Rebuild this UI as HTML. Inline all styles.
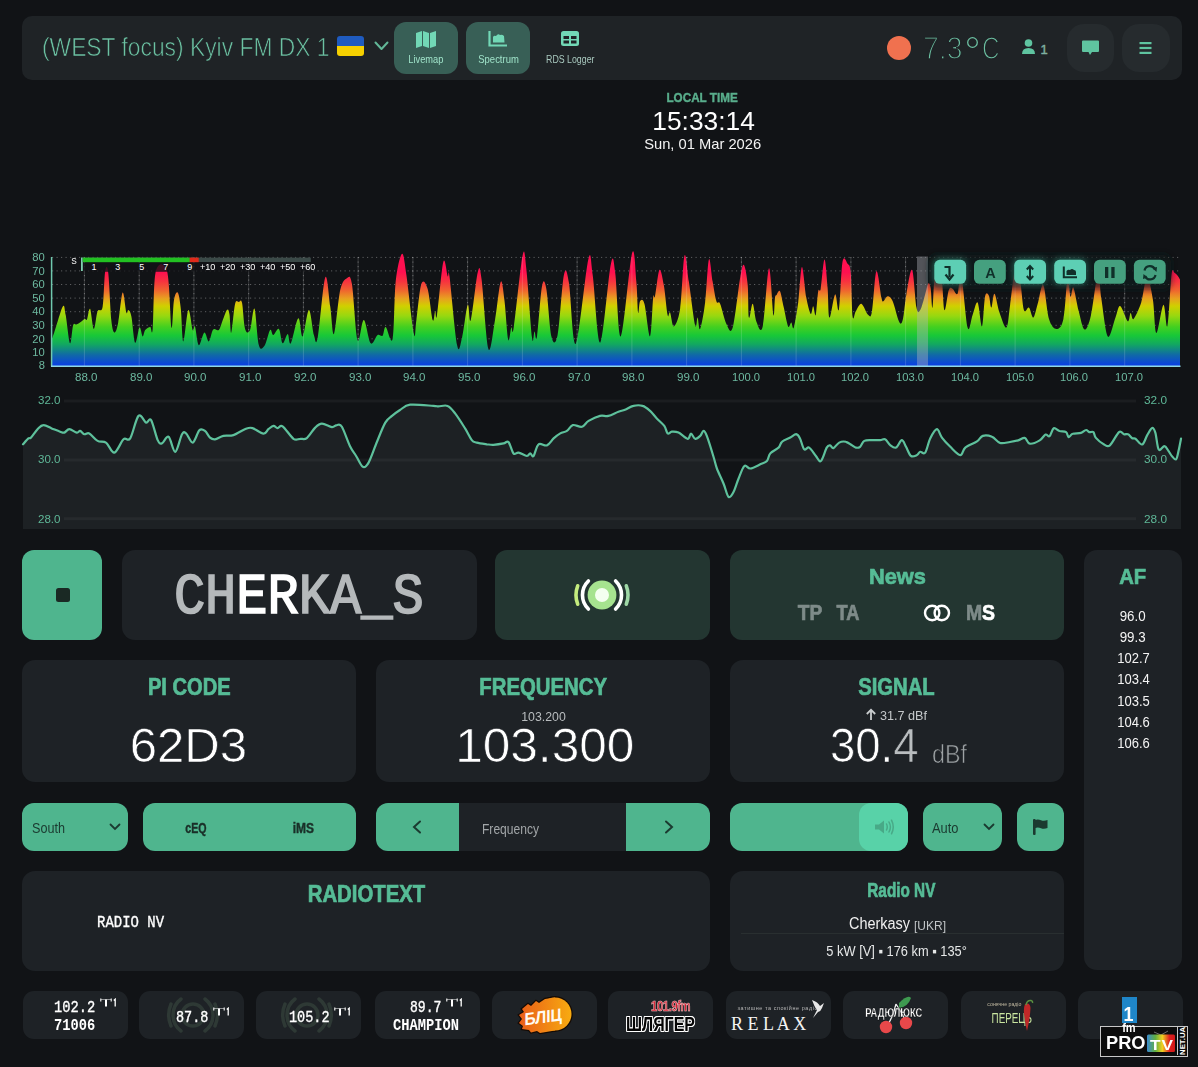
<!DOCTYPE html>
<html><head><meta charset="utf-8"><title>FM-DX</title>
<style>
html,body{margin:0;padding:0}
body{width:1198px;height:1067px;background:#111316;position:relative;overflow:hidden;font-family:"Liberation Sans",sans-serif}
.t{position:absolute;white-space:nowrap}
.b{position:absolute;display:block}
</style></head><body>
<div class="b" style="left:22px;top:16px;width:1160px;height:64px;background:#1f2326;border-radius:10px;"></div>
<div class="t" style="left:42.0px;top:34.0px;width:327.9px;font-family:'Liberation Sans', sans-serif;font-weight:400;font-size:26px;line-height:26px;color:#6cc2a3;transform:scale(0.878,1.000) ;transform-origin:left 22.0px;-webkit-text-stroke:0.7px #1f2326;">(WEST focus) Kyiv FM DX 1</div>
<div class="b" style="left:337px;top:36px;width:27px;height:20px;border-radius:3px;overflow:hidden"><div style="height:10px;background:#1f5bbf"></div><div style="height:10px;background:#f6d000"></div></div>
<svg class="b" style="left:372px;top:38px" width="20" height="16" viewBox="0 0 20 16"><path d="M3.5 4.5 L9.5 11 L15.5 4.5" fill="none" stroke="#62b898" stroke-width="2" stroke-linecap="round" stroke-linejoin="round"/></svg>
<div class="b" style="left:394px;top:22px;width:64px;height:52px;background:#385f56;border-radius:12px;"></div>
<div class="b" style="left:466px;top:22px;width:64px;height:52px;background:#385f56;border-radius:12px;"></div>
<svg class="b" style="left:414px;top:29px" width="24" height="20" viewBox="0 0 24 20"><path d="M2 4 L8 2 L8 17 L2 19 Z M9 2 L15 4 L15 19 L9 17 Z M16 4 L22 2 L22 17 L16 19 Z" fill="#72d8b6"/></svg>
<svg class="b" style="left:486px;top:29px" width="24" height="20" viewBox="0 0 24 20"><path d="M3.5 2 L3.5 16.5 L21 16.5" fill="none" stroke="#72d8b6" stroke-width="2.2"/><path d="M7 13.5 L7 8 Q8 6 10 7 Q12 4 14 6 Q16 5 18 7 L18.5 13.5 Z" fill="#72d8b6"/></svg>
<svg class="b" style="left:559px;top:29px" width="22" height="20" viewBox="0 0 22 20"><rect x="2" y="2" width="18" height="15" rx="2.5" fill="#72d8b6"/><rect x="4.5" y="7" width="5.5" height="3" fill="#1f2326"/><rect x="12" y="7" width="5.5" height="3" fill="#1f2326"/><rect x="4.5" y="11.5" width="5.5" height="3" fill="#1f2326"/><rect x="12" y="11.5" width="5.5" height="3" fill="#1f2326"/></svg>
<div class="t" style="left:405.2px;top:53.9px;width:41.6px;font-family:'Liberation Sans', sans-serif;font-weight:400;font-size:11px;line-height:11px;color:#9fe3c9;transform:scale(0.842,1.000) ;transform-origin:center 9.3px;">Livemap</div>
<div class="t" style="left:474.5px;top:53.9px;width:47.1px;font-family:'Liberation Sans', sans-serif;font-weight:400;font-size:11px;line-height:11px;color:#9fe3c9;transform:scale(0.860,1.000) ;transform-origin:center 9.3px;">Spectrum</div>
<div class="t" style="left:539.7px;top:53.9px;width:60.5px;font-family:'Liberation Sans', sans-serif;font-weight:400;font-size:11px;line-height:11px;color:#a9c9bf;transform:scale(0.801,1.000) ;transform-origin:center 9.3px;">RDS Logger</div>
<div class="b" style="left:886.5px;top:36px;width:24px;height:24px;background:#f0714f;border-radius:12px;"></div>
<div class="t" style="left:922.5px;top:31.9px;width:44.5px;font-family:'Liberation Sans', sans-serif;font-weight:400;font-size:32px;line-height:32px;color:#6cc0a2;transform:scale(0.888,1.000) ;transform-origin:left 27.1px;-webkit-text-stroke:1.5px #1f2326;">7.3</div>
<svg class="b" style="left:965px;top:35px" width="16" height="16" viewBox="0 0 16 16"><circle cx="7.5" cy="7.5" r="4.8" fill="none" stroke="#6cc0a2" stroke-width="1.3"/></svg>
<div class="t" style="left:982.0px;top:31.9px;width:23.1px;font-family:'Liberation Sans', sans-serif;font-weight:400;font-size:32px;line-height:32px;color:#6cc0a2;transform:scale(0.757,1.000) ;transform-origin:left 27.1px;-webkit-text-stroke:1.5px #1f2326;">C</div>
<svg class="b" style="left:1020px;top:38px" width="18" height="18" viewBox="0 0 18 18"><circle cx="8.5" cy="5" r="3.8" fill="#5fc4a0"/><path d="M2 16 Q2 10 8.5 10 Q15 10 15 16 Z" fill="#5fc4a0"/></svg>
<div class="t" style="left:1040.5px;top:43.0px;width:7.2px;font-family:'Liberation Sans', sans-serif;font-weight:400;font-size:13px;line-height:13px;color:#7fb0a0;-webkit-text-stroke:0.4px currentColor;">1</div>
<div class="b" style="left:1067px;top:24px;width:47px;height:48px;background:#262b2e;border-radius:17px;"></div>
<div class="b" style="left:1122px;top:24px;width:48px;height:48px;background:#262b2e;border-radius:17px;"></div>
<svg class="b" style="left:1080px;top:38px" width="22" height="20" viewBox="0 0 22 20"><path d="M3 2.5 Q2 2.5 2 3.5 L2 13 Q2 14 3 14 L8.5 14 L10 17 L12 14 L18 14 Q19 14 19 13 L19 3.5 Q19 2.5 18 2.5 Z" fill="#5fc4a0"/></svg>
<svg class="b" style="left:1136px;top:39px" width="20" height="18" viewBox="0 0 20 18"><rect x="3.5" y="3" width="12" height="2.2" fill="#5fc4a0"/><rect x="3.5" y="7.9" width="12" height="2.2" fill="#5fc4a0"/><rect x="3.5" y="12.8" width="12" height="2.2" fill="#5fc4a0"/></svg>
<div class="t" style="left:663.8px;top:91.9px;width:76.4px;font-family:'Liberation Sans', sans-serif;font-weight:700;font-size:12.5px;line-height:12.5px;color:#59ae8c;transform:scale(0.936,1.000) ;transform-origin:center 10.6px;-webkit-text-stroke:0.4px currentColor;">LOCAL TIME</div>
<div class="t" style="left:652.7px;top:108.0px;width:101.2px;font-family:'Liberation Sans', sans-serif;font-weight:400;font-size:26px;line-height:26px;color:#ffffff;transform:scale(1.014,1.000) ;transform-origin:center 22.0px;">15:33:14</div>
<div class="t" style="left:642.7px;top:136.3px;width:119.2px;font-family:'Liberation Sans', sans-serif;font-weight:400;font-size:15px;line-height:15px;color:#f4f4f4;transform:scale(0.981,1.000) ;transform-origin:center 12.7px;">Sun, 01 Mar 2026</div>
<svg class="b" style="left:0;top:240px" width="1198" height="150" viewBox="0 240 1198 150">
<defs><linearGradient id="sg" gradientUnits="userSpaceOnUse" x1="0" y1="366" x2="0" y2="257"><stop offset="0" stop-color="#0a3ce6"/><stop offset="0.10" stop-color="#1068a8"/><stop offset="0.20" stop-color="#12a860"/><stop offset="0.28" stop-color="#18c838"/><stop offset="0.36" stop-color="#44d020"/><stop offset="0.46" stop-color="#98d810"/><stop offset="0.55" stop-color="#d0d000"/><stop offset="0.62" stop-color="#e8a020"/><stop offset="0.70" stop-color="#f06030"/><stop offset="0.78" stop-color="#f83040"/><stop offset="0.86" stop-color="#ff1050"/><stop offset="1" stop-color="#ff1050"/></linearGradient><filter id="glow" x="-50%" y="-50%" width="200%" height="200%"><feGaussianBlur stdDeviation="3"/></filter></defs>
<line x1="52" y1="352.4" x2="1180" y2="352.4" stroke="rgba(255,255,255,0.32)" stroke-width="1" stroke-dasharray="1.2 3.3"/>
<line x1="52" y1="338.8" x2="1180" y2="338.8" stroke="rgba(255,255,255,0.32)" stroke-width="1" stroke-dasharray="1.2 3.3"/>
<line x1="52" y1="325.3" x2="1180" y2="325.3" stroke="rgba(255,255,255,0.32)" stroke-width="1" stroke-dasharray="1.2 3.3"/>
<line x1="52" y1="311.7" x2="1180" y2="311.7" stroke="rgba(255,255,255,0.32)" stroke-width="1" stroke-dasharray="1.2 3.3"/>
<line x1="52" y1="298.1" x2="1180" y2="298.1" stroke="rgba(255,255,255,0.32)" stroke-width="1" stroke-dasharray="1.2 3.3"/>
<line x1="52" y1="284.5" x2="1180" y2="284.5" stroke="rgba(255,255,255,0.32)" stroke-width="1" stroke-dasharray="1.2 3.3"/>
<line x1="52" y1="270.9" x2="1180" y2="270.9" stroke="rgba(255,255,255,0.32)" stroke-width="1" stroke-dasharray="1.2 3.3"/>
<line x1="52" y1="257.4" x2="1180" y2="257.4" stroke="rgba(255,255,255,0.32)" stroke-width="1" stroke-dasharray="1.2 3.3"/>
<line x1="84.4" y1="257" x2="84.4" y2="366" stroke="rgba(255,255,255,0.32)" stroke-width="1" stroke-dasharray="1.2 3.3"/>
<line x1="139.2" y1="257" x2="139.2" y2="366" stroke="rgba(255,255,255,0.32)" stroke-width="1" stroke-dasharray="1.2 3.3"/>
<line x1="193.9" y1="257" x2="193.9" y2="366" stroke="rgba(255,255,255,0.32)" stroke-width="1" stroke-dasharray="1.2 3.3"/>
<line x1="248.7" y1="257" x2="248.7" y2="366" stroke="rgba(255,255,255,0.32)" stroke-width="1" stroke-dasharray="1.2 3.3"/>
<line x1="303.4" y1="257" x2="303.4" y2="366" stroke="rgba(255,255,255,0.32)" stroke-width="1" stroke-dasharray="1.2 3.3"/>
<line x1="358.1" y1="257" x2="358.1" y2="366" stroke="rgba(255,255,255,0.32)" stroke-width="1" stroke-dasharray="1.2 3.3"/>
<line x1="412.9" y1="257" x2="412.9" y2="366" stroke="rgba(255,255,255,0.32)" stroke-width="1" stroke-dasharray="1.2 3.3"/>
<line x1="467.6" y1="257" x2="467.6" y2="366" stroke="rgba(255,255,255,0.32)" stroke-width="1" stroke-dasharray="1.2 3.3"/>
<line x1="522.4" y1="257" x2="522.4" y2="366" stroke="rgba(255,255,255,0.32)" stroke-width="1" stroke-dasharray="1.2 3.3"/>
<line x1="577.1" y1="257" x2="577.1" y2="366" stroke="rgba(255,255,255,0.32)" stroke-width="1" stroke-dasharray="1.2 3.3"/>
<line x1="631.9" y1="257" x2="631.9" y2="366" stroke="rgba(255,255,255,0.32)" stroke-width="1" stroke-dasharray="1.2 3.3"/>
<line x1="686.6" y1="257" x2="686.6" y2="366" stroke="rgba(255,255,255,0.32)" stroke-width="1" stroke-dasharray="1.2 3.3"/>
<line x1="741.4" y1="257" x2="741.4" y2="366" stroke="rgba(255,255,255,0.32)" stroke-width="1" stroke-dasharray="1.2 3.3"/>
<line x1="796.1" y1="257" x2="796.1" y2="366" stroke="rgba(255,255,255,0.32)" stroke-width="1" stroke-dasharray="1.2 3.3"/>
<line x1="850.9" y1="257" x2="850.9" y2="366" stroke="rgba(255,255,255,0.32)" stroke-width="1" stroke-dasharray="1.2 3.3"/>
<line x1="905.6" y1="257" x2="905.6" y2="366" stroke="rgba(255,255,255,0.32)" stroke-width="1" stroke-dasharray="1.2 3.3"/>
<line x1="960.4" y1="257" x2="960.4" y2="366" stroke="rgba(255,255,255,0.32)" stroke-width="1" stroke-dasharray="1.2 3.3"/>
<line x1="1015.1" y1="257" x2="1015.1" y2="366" stroke="rgba(255,255,255,0.32)" stroke-width="1" stroke-dasharray="1.2 3.3"/>
<line x1="1069.9" y1="257" x2="1069.9" y2="366" stroke="rgba(255,255,255,0.32)" stroke-width="1" stroke-dasharray="1.2 3.3"/>
<line x1="1124.7" y1="257" x2="1124.7" y2="366" stroke="rgba(255,255,255,0.32)" stroke-width="1" stroke-dasharray="1.2 3.3"/>
<path d="M51.5,366 L51.5,340.1 C54.2,334.6 60.3,311.1 62.5,307.0 C64.7,302.8 64.4,309.1 65.7,315.1 C66.9,321.2 68.8,341.6 70.0,343.3 C71.3,344.9 72.1,328.3 73.2,325.1 C74.2,322.0 75.1,324.9 76.3,324.5 C77.4,324.1 78.7,323.6 80.0,322.6 C81.4,321.7 83.3,319.4 84.4,318.9 C85.6,318.3 86.0,321.2 86.9,319.5 C87.9,317.8 88.9,307.3 90.1,308.8 C91.2,310.4 92.6,328.5 93.8,328.9 C95.1,329.3 96.1,315.0 97.6,311.3 C99.0,307.7 101.3,313.5 102.6,307.0 C103.8,300.4 104.2,277.6 105.1,271.9 C106.0,266.2 107.2,264.5 108.2,272.5 C109.3,280.6 110.3,310.1 111.3,320.1 C112.4,330.1 113.3,332.2 114.5,332.6 C115.6,333.1 116.9,329.3 118.2,322.6 C119.6,315.9 121.3,294.2 122.6,292.6 C124.0,290.9 125.4,309.7 126.4,312.6 C127.3,315.5 127.4,309.5 128.3,310.1 C129.1,310.7 130.2,310.9 131.4,316.4 C132.5,321.8 133.8,340.8 135.1,342.7 C136.5,344.5 138.3,328.7 139.5,327.6 C140.8,326.6 141.7,336.0 142.7,336.4 C143.6,336.8 143.9,331.7 145.2,330.1 C146.4,328.6 148.9,327.2 150.2,327.0 C151.4,326.8 151.7,338.2 152.7,328.9 C153.6,319.6 153.4,280.9 155.8,271.3 C158.2,261.7 164.5,261.9 167.1,271.3 C169.7,280.7 170.3,322.8 171.4,327.6 C172.6,332.4 172.9,305.9 174.0,300.1 C175.0,294.2 176.6,291.1 177.7,292.6 C178.9,294.0 179.9,300.7 180.8,308.8 C181.8,317.0 182.1,341.2 183.3,341.4 C184.6,341.6 186.8,312.0 188.3,310.1 C189.9,308.2 191.6,327.4 192.7,330.1 C193.8,332.8 194.0,323.9 195.0,326.4 C196.0,328.9 197.2,344.1 198.8,345.2 C200.3,346.2 202.7,333.3 204.4,332.6 C206.1,332.0 207.3,341.9 208.8,341.4 C210.2,340.9 211.5,331.4 213.2,329.5 C214.8,327.6 217.3,331.3 218.8,330.1 C220.2,329.0 220.6,326.0 221.9,322.6 C223.3,319.3 225.7,311.6 226.9,310.1 C228.2,308.6 228.7,310.1 229.4,313.9 C230.2,317.6 230.4,334.3 231.3,332.6 C232.2,331.0 233.8,308.9 235.1,303.8 C236.3,298.7 237.7,302.2 238.8,302.0 C240.0,301.8 240.9,298.1 242.0,302.6 C243.0,307.1 243.7,324.3 245.1,328.9 C246.4,333.5 248.5,333.5 250.1,330.1 C251.7,326.8 253.0,306.3 254.5,308.8 C255.9,311.3 257.2,339.0 258.9,345.2 C260.5,351.3 262.6,348.3 264.5,345.8 C266.4,343.3 268.7,331.9 270.1,330.1 C271.6,328.4 271.8,335.3 273.3,335.1 C274.7,334.9 277.3,327.5 278.9,328.9 C280.5,330.2 281.2,342.4 282.6,343.3 C284.1,344.1 286.3,333.9 287.7,333.9 C289.0,333.9 289.0,345.9 290.8,343.3 C292.6,340.7 296.3,319.4 298.3,318.2 C300.3,317.1 300.9,337.7 302.7,336.4 C304.4,335.0 307.1,310.3 308.9,310.1 C310.8,309.9 312.5,330.5 313.9,335.1 C315.4,339.7 315.8,347.2 317.7,337.6 C319.6,328.0 323.1,282.8 325.2,277.5 C327.3,272.3 328.8,297.0 330.2,306.3 C331.7,315.7 332.3,336.6 334.0,333.9 C335.6,331.2 338.1,299.4 340.2,290.1 C342.4,280.8 344.9,279.2 346.9,278.2 C348.8,277.1 350.1,273.5 351.9,283.8 C353.7,294.1 355.5,334.1 357.5,340.1 C359.5,346.2 361.6,319.6 363.8,320.1 C366.0,320.6 368.4,340.8 370.7,343.3 C373.0,345.8 375.6,336.4 377.6,335.1 C379.5,333.9 381.2,337.1 382.6,335.8 C383.9,334.4 384.0,326.5 385.7,327.0 C387.4,327.5 390.9,346.5 392.6,338.9 C394.3,331.3 394.2,295.5 395.7,281.3 C397.3,267.1 400.2,254.8 402.0,253.8 C403.7,252.7 404.4,261.7 406.4,275.0 C408.3,288.4 412.2,326.4 413.9,333.9 C415.5,341.4 415.1,328.5 416.4,320.1 C417.6,311.8 419.5,289.0 421.4,283.8 C423.3,278.6 425.8,282.8 427.6,288.8 C429.5,294.9 431.4,316.4 432.7,320.1 C433.9,323.9 434.4,312.2 435.2,311.3 C435.9,310.5 435.7,323.3 437.0,315.1 C438.4,306.9 441.5,268.4 443.3,261.9 C445.1,255.4 446.6,273.8 447.7,276.3 C448.7,278.8 448.0,265.4 449.6,276.9 C451.1,288.4 455.0,335.0 457.1,345.2 C459.2,355.3 460.3,344.3 462.1,337.6 C463.8,331.0 466.2,308.0 467.7,305.1 C469.2,302.2 469.2,325.5 470.8,320.1 C472.5,314.7 476.0,279.4 477.7,272.5 C479.5,265.7 479.7,266.1 481.5,278.8 C483.3,291.5 486.1,342.0 488.4,348.9 C490.6,355.8 493.0,331.3 495.0,320.1 C497.1,308.9 499.1,285.3 500.7,281.9 C502.2,278.6 503.2,290.5 504.4,300.1 C505.7,309.7 507.0,334.9 508.2,339.5 C509.3,344.1 510.4,329.7 511.3,327.6 C512.2,325.5 511.9,339.0 513.8,327.0 C515.7,315.0 520.5,265.3 522.6,255.6 C524.6,245.9 524.8,255.1 526.3,268.8 C527.9,282.4 530.6,327.2 532.0,337.6 C533.3,348.1 533.6,331.6 534.5,331.4 C535.3,331.2 535.7,343.9 537.0,336.4 C538.2,328.9 540.4,294.2 542.0,286.3 C543.5,278.4 544.8,280.5 546.3,288.8 C547.9,297.2 549.5,328.7 551.4,336.4 C553.2,344.1 555.5,345.4 557.6,335.1 C559.7,324.9 562.0,283.8 563.9,275.0 C565.8,266.3 566.9,271.1 568.9,282.6 C570.9,294.0 572.5,347.8 575.8,343.9 C579.0,340.0 585.5,270.9 588.3,259.4 C591.1,247.9 590.7,261.2 592.7,275.0 C594.7,288.9 597.2,344.4 600.2,342.7 C603.2,340.9 608.3,276.1 610.8,264.4 C613.3,252.7 613.5,260.5 615.2,272.5 C616.9,284.5 618.0,339.6 620.8,336.4 C623.7,333.2 629.5,262.3 632.1,253.1 C634.7,243.9 635.3,271.4 636.3,281.3 C637.3,291.2 637.5,309.3 638.1,312.6 C638.8,315.9 639.0,302.8 640.0,301.3 C641.1,299.9 642.7,298.0 644.4,303.8 C646.1,309.7 648.6,337.4 650.0,336.4 C651.5,335.3 652.3,304.3 653.2,297.6 C654.0,290.9 654.0,300.9 655.0,296.3 C656.1,291.7 658.0,271.9 659.4,270.0 C660.9,268.2 662.4,277.5 663.8,285.1 C665.2,292.6 666.5,310.5 667.6,315.1 C668.6,319.7 669.0,310.7 670.1,312.6 C671.1,314.5 672.2,327.0 673.8,326.4 C675.5,325.7 678.3,320.6 680.1,308.8 C681.9,297.1 683.0,260.2 684.5,255.6 C685.9,251.0 687.1,269.7 688.8,281.3 C690.6,292.9 693.6,319.1 695.1,325.1 C696.6,331.2 696.8,317.0 697.6,317.6 C698.4,318.2 698.9,331.4 700.1,328.9 C701.4,326.4 703.7,314.2 705.1,302.6 C706.6,291.0 707.6,262.9 708.9,259.4 C710.1,255.8 711.4,274.3 712.6,281.3 C713.9,288.3 715.1,297.6 716.4,301.3 C717.6,305.1 718.5,300.1 720.1,303.8 C721.8,307.6 724.3,319.9 726.4,323.9 C728.5,327.8 730.4,335.3 732.7,327.6 C735.0,319.9 738.3,288.0 740.2,277.5 C742.1,267.1 742.7,263.8 743.9,265.0 C745.2,266.3 746.9,276.3 747.7,285.1 C748.5,293.8 748.1,314.5 748.9,317.6 C749.8,320.7 751.4,303.1 752.7,303.8 C754.0,304.6 754.8,318.2 756.5,322.0 C758.1,325.7 760.6,335.3 762.7,326.4 C764.8,317.4 767.2,270.0 769.0,268.2 C770.7,266.3 772.4,310.2 773.4,315.1 C774.4,320.0 774.5,300.9 775.0,297.6 C775.5,294.2 775.7,296.1 776.5,295.1 C777.3,294.0 778.8,289.2 780.0,291.3 C781.2,293.4 782.4,301.8 783.8,307.6 C785.1,313.4 786.9,323.9 788.1,326.4 C789.4,328.9 790.3,322.4 791.3,322.6 C792.2,322.8 792.6,331.0 793.8,327.6 C794.9,324.3 796.8,312.7 798.2,302.6 C799.5,292.5 800.6,267.7 801.9,266.9 C803.3,266.1 804.8,289.8 806.3,297.6 C807.8,305.4 809.5,312.4 810.7,313.9 C811.8,315.3 812.4,306.1 813.2,306.3 C814.0,306.6 814.9,317.6 815.7,315.1 C816.5,312.6 817.4,295.7 818.2,291.3 C819.0,286.9 819.7,294.1 820.7,288.8 C821.7,283.5 823.3,259.6 824.5,259.4 C825.6,259.2 826.8,277.9 827.6,287.6 C828.4,297.3 828.2,316.5 829.5,317.6 C830.7,318.8 833.5,295.8 835.1,294.4 C836.7,293.1 837.6,315.0 838.9,309.5 C840.1,303.9 841.1,268.9 842.6,261.3 C844.1,253.7 846.3,261.9 847.6,263.8 C849.0,265.7 849.9,263.8 850.7,272.5 C851.6,281.3 851.8,309.9 852.6,316.4 C853.5,322.8 854.3,313.4 855.8,311.3 C857.2,309.3 859.3,303.2 861.4,303.8 C863.5,304.5 866.5,313.9 868.3,315.1 C870.1,316.4 870.7,318.7 872.0,311.3 C873.4,304.0 874.8,273.6 876.4,271.3 C878.0,269.0 880.3,292.6 881.4,297.6 C882.6,302.6 882.3,301.5 883.3,301.3 C884.3,301.1 886.1,296.3 887.7,296.3 C889.2,296.3 890.8,297.2 892.7,301.3 C894.6,305.5 897.3,318.2 899.0,321.4 C900.6,324.5 901.5,324.7 902.7,320.1 C904.0,315.5 904.9,302.2 906.5,293.8 C908.0,285.5 910.4,267.7 912.1,270.0 C913.8,272.3 915.1,300.9 916.5,307.6 C917.8,314.3 918.8,312.2 920.2,310.1 C921.7,308.0 923.7,299.5 925.0,295.1 C926.3,290.7 927.2,285.1 928.1,283.8 C929.1,282.6 929.9,283.6 930.6,287.6 C931.4,291.5 931.8,309.7 932.5,307.6 C933.3,305.5 933.6,280.5 935.0,275.0 C936.5,269.6 939.7,269.2 941.3,275.0 C942.8,280.9 943.2,307.6 944.4,310.1 C945.7,312.6 947.4,293.6 948.8,290.1 C950.2,286.5 951.1,288.2 952.6,288.8 C954.0,289.4 956.1,296.1 957.6,293.8 C959.0,291.5 959.6,269.4 961.3,275.0 C963.0,280.7 965.7,320.9 967.6,327.6 C969.5,334.3 970.9,319.3 972.6,315.1 C974.3,310.9 976.0,300.7 977.6,302.6 C979.2,304.5 980.7,327.4 982.0,326.4 C983.2,325.3 984.0,301.4 985.1,296.3 C986.3,291.2 987.8,293.8 988.9,295.7 C989.9,297.6 990.4,307.9 991.4,307.6 C992.3,307.3 993.1,293.0 994.5,293.8 C995.9,294.7 997.5,307.0 999.5,312.6 C1001.5,318.2 1004.6,328.9 1006.4,327.6 C1008.2,326.4 1008.7,314.9 1010.1,305.1 C1011.6,295.3 1013.5,272.7 1015.2,268.8 C1016.8,264.8 1018.7,274.4 1020.2,281.3 C1021.6,288.2 1022.5,305.7 1023.9,310.1 C1025.4,314.5 1027.4,306.3 1028.9,307.6 C1030.5,308.8 1031.8,318.2 1033.3,317.6 C1034.8,317.0 1036.0,309.3 1037.7,303.8 C1039.4,298.4 1041.4,282.6 1043.3,285.1 C1045.2,287.6 1046.8,311.6 1049.0,318.9 C1051.2,326.2 1054.1,328.9 1056.5,328.9 C1058.9,328.9 1061.6,327.4 1063.4,318.9 C1065.3,310.5 1066.4,281.7 1067.5,278.0 C1068.7,274.3 1069.5,295.2 1070.5,296.7 C1071.4,298.3 1072.0,285.1 1073.4,287.4 C1074.7,289.7 1076.8,303.8 1078.6,310.8 C1080.5,317.8 1082.4,328.7 1084.5,329.5 C1086.5,330.2 1088.7,324.8 1090.9,315.4 C1093.1,306.1 1096.2,276.1 1097.9,273.4 C1099.7,270.6 1099.8,288.6 1101.4,299.1 C1103.1,309.6 1105.5,333.4 1107.8,336.5 C1110.2,339.6 1113.4,322.8 1115.4,317.8 C1117.5,312.7 1118.1,305.5 1120.1,306.1 C1122.2,306.7 1126.0,320.1 1127.7,321.3 C1129.5,322.5 1129.7,313.5 1130.6,313.1 C1131.6,312.7 1131.8,320.7 1133.6,318.9 C1135.3,317.2 1138.9,309.6 1141.2,302.6 C1143.4,295.6 1145.0,277.5 1147.0,276.9 C1148.9,276.3 1151.3,289.7 1152.8,299.1 C1154.4,308.4 1154.6,332.0 1156.3,333.0 C1158.1,333.9 1161.5,306.1 1163.4,304.9 C1165.2,303.8 1166.1,331.0 1167.4,326.0 C1168.8,320.9 1170.4,283.4 1171.5,274.5 C1172.7,265.7 1173.3,272.4 1174.5,272.8 C1175.6,273.2 1177.7,275.8 1178.5,276.9 C1179.4,277.9 1179.5,278.8 1179.7,279.2 L1180,279.2 L1180,366 Z" fill="url(#sg)"/>
<line x1="84.4" y1="257" x2="84.4" y2="366" stroke="rgba(255,255,255,0.16)" stroke-width="1"/>
<line x1="139.2" y1="257" x2="139.2" y2="366" stroke="rgba(255,255,255,0.16)" stroke-width="1"/>
<line x1="193.9" y1="257" x2="193.9" y2="366" stroke="rgba(255,255,255,0.16)" stroke-width="1"/>
<line x1="248.7" y1="257" x2="248.7" y2="366" stroke="rgba(255,255,255,0.16)" stroke-width="1"/>
<line x1="303.4" y1="257" x2="303.4" y2="366" stroke="rgba(255,255,255,0.16)" stroke-width="1"/>
<line x1="358.1" y1="257" x2="358.1" y2="366" stroke="rgba(255,255,255,0.16)" stroke-width="1"/>
<line x1="412.9" y1="257" x2="412.9" y2="366" stroke="rgba(255,255,255,0.16)" stroke-width="1"/>
<line x1="467.6" y1="257" x2="467.6" y2="366" stroke="rgba(255,255,255,0.16)" stroke-width="1"/>
<line x1="522.4" y1="257" x2="522.4" y2="366" stroke="rgba(255,255,255,0.16)" stroke-width="1"/>
<line x1="577.1" y1="257" x2="577.1" y2="366" stroke="rgba(255,255,255,0.16)" stroke-width="1"/>
<line x1="631.9" y1="257" x2="631.9" y2="366" stroke="rgba(255,255,255,0.16)" stroke-width="1"/>
<line x1="686.6" y1="257" x2="686.6" y2="366" stroke="rgba(255,255,255,0.16)" stroke-width="1"/>
<line x1="741.4" y1="257" x2="741.4" y2="366" stroke="rgba(255,255,255,0.16)" stroke-width="1"/>
<line x1="796.1" y1="257" x2="796.1" y2="366" stroke="rgba(255,255,255,0.16)" stroke-width="1"/>
<line x1="850.9" y1="257" x2="850.9" y2="366" stroke="rgba(255,255,255,0.16)" stroke-width="1"/>
<line x1="905.6" y1="257" x2="905.6" y2="366" stroke="rgba(255,255,255,0.16)" stroke-width="1"/>
<line x1="960.4" y1="257" x2="960.4" y2="366" stroke="rgba(255,255,255,0.16)" stroke-width="1"/>
<line x1="1015.1" y1="257" x2="1015.1" y2="366" stroke="rgba(255,255,255,0.16)" stroke-width="1"/>
<line x1="1069.9" y1="257" x2="1069.9" y2="366" stroke="rgba(255,255,255,0.16)" stroke-width="1"/>
<line x1="1124.7" y1="257" x2="1124.7" y2="366" stroke="rgba(255,255,255,0.16)" stroke-width="1"/>
<rect x="917" y="256.5" width="11" height="109.5" fill="rgba(180,182,190,0.40)"/>
<line x1="51.6" y1="257" x2="51.6" y2="366.5" stroke="#6fc8ae" stroke-width="1.5"/>
<line x1="51" y1="366.3" x2="1180.5" y2="366.3" stroke="#8fd8e6" stroke-width="1.6"/>
<rect x="82.8" y="262.2" width="228" height="9.6" fill="rgba(17,19,22,0.80)"/>
<rect x="81" y="257.5" width="1.8" height="13.5" fill="#7fd0b0"/>
<rect x="82.8" y="257.6" width="228" height="4.4" fill="#3b4a48"/>
<rect x="82.8" y="257.6" width="107" height="4.6" fill="#22c022"/>
<rect x="189.7" y="257.6" width="9" height="4.6" fill="#e02a1a"/>
<rect x="929" y="255" width="242" height="34" rx="8" fill="#0c1f1a" opacity="0.75" filter="url(#glow)"/>
<rect x="933.3" y="258.5" width="33.5" height="26" rx="6" fill="#3fb89a" opacity="0.45" filter="url(#glow)"/>
<rect x="1013.2" y="258.5" width="33.5" height="26" rx="6" fill="#3fb89a" opacity="0.45" filter="url(#glow)"/>
<rect x="1053.2" y="258.5" width="33.5" height="26" rx="6" fill="#3fb89a" opacity="0.45" filter="url(#glow)"/>
<rect x="934.3" y="259.8" width="31.8" height="24" rx="5.5" fill="#5dcfb4"/>
<rect x="974.0" y="259.8" width="31.8" height="24" rx="5.5" fill="#45a07f"/>
<rect x="1014.2" y="259.8" width="31.8" height="24" rx="5.5" fill="#5dcfb4"/>
<rect x="1054.2" y="259.8" width="31.8" height="24" rx="5.5" fill="#5dcfb4"/>
<rect x="1094.0" y="259.8" width="31.8" height="24" rx="5.5" fill="#45a07f"/>
<rect x="1133.9" y="259.8" width="31.8" height="24" rx="5.5" fill="#45a07f"/>
<path d="M944.5,267 L949.5,267 L949.5,277" fill="none" stroke="#10302a" stroke-width="2.2"/><path d="M945.5,274.5 L949.5,279.5 L953.5,274.5" fill="none" stroke="#10302a" stroke-width="2.2" stroke-linejoin="miter"/>
<path d="M1030,267 L1030,278.5" stroke="#10302a" stroke-width="2"/><path d="M1026.8,269.5 L1030,266 L1033.2,269.5 M1026.8,276 L1030,279.5 L1033.2,276" fill="none" stroke="#10302a" stroke-width="2"/>
<path d="M1063.8,266.5 L1063.8,277.3 L1077,277.3" fill="none" stroke="#10302a" stroke-width="2"/><path d="M1066.5,275 L1066.5,271 Q1068,269 1070,270 Q1072,268 1074,270 Q1076,270 1076,272 L1076,275 Z" fill="#10302a"/>
<rect x="1105" y="267" width="3.3" height="11" fill="#10302a"/><rect x="1111.3" y="267" width="3.3" height="11" fill="#10302a"/>
<path d="M1144.5,270.5 A5.5,5.5 0 0 1 1155,269.5 M1155.5,275 A5.5,5.5 0 0 1 1145,276" fill="none" stroke="#10302a" stroke-width="2.2"/><path d="M1152.5,268 L1157,267 L1156.5,272 Z M1147.5,277.5 L1143,279 L1143.5,274 Z" fill="#10302a"/>
</svg>
<div class="t" style="left:984.6px;top:265.4px;width:11.2px;font-family:'Liberation Sans', sans-serif;font-weight:700;font-size:15.5px;line-height:15.5px;color:#10302a;transform:scale(0.938,1.000) ;transform-origin:center 13.1px;">A</div>
<div class="t" style="left:33.3px;top:347.1px;width:11.7px;font-family:'Liberation Sans', sans-serif;font-weight:400;font-size:10.5px;line-height:10.5px;color:#6db9a0;transform:scale(1.070,1.000) ;transform-origin:right 8.9px;">10</div>
<div class="t" style="left:33.3px;top:333.5px;width:11.7px;font-family:'Liberation Sans', sans-serif;font-weight:400;font-size:10.5px;line-height:10.5px;color:#6db9a0;transform:scale(1.070,1.000) ;transform-origin:right 8.9px;">20</div>
<div class="t" style="left:33.3px;top:320.0px;width:11.7px;font-family:'Liberation Sans', sans-serif;font-weight:400;font-size:10.5px;line-height:10.5px;color:#6db9a0;transform:scale(1.070,1.000) ;transform-origin:right 8.9px;">30</div>
<div class="t" style="left:33.3px;top:306.4px;width:11.7px;font-family:'Liberation Sans', sans-serif;font-weight:400;font-size:10.5px;line-height:10.5px;color:#6db9a0;transform:scale(1.070,1.000) ;transform-origin:right 8.9px;">40</div>
<div class="t" style="left:33.3px;top:292.8px;width:11.7px;font-family:'Liberation Sans', sans-serif;font-weight:400;font-size:10.5px;line-height:10.5px;color:#6db9a0;transform:scale(1.070,1.000) ;transform-origin:right 8.9px;">50</div>
<div class="t" style="left:33.3px;top:279.2px;width:11.7px;font-family:'Liberation Sans', sans-serif;font-weight:400;font-size:10.5px;line-height:10.5px;color:#6db9a0;transform:scale(1.070,1.000) ;transform-origin:right 8.9px;">60</div>
<div class="t" style="left:33.3px;top:265.6px;width:11.7px;font-family:'Liberation Sans', sans-serif;font-weight:400;font-size:10.5px;line-height:10.5px;color:#6db9a0;transform:scale(1.070,1.000) ;transform-origin:right 8.9px;">70</div>
<div class="t" style="left:33.3px;top:252.1px;width:11.7px;font-family:'Liberation Sans', sans-serif;font-weight:400;font-size:10.5px;line-height:10.5px;color:#6db9a0;transform:scale(1.070,1.000) ;transform-origin:right 8.9px;">80</div>
<div class="t" style="left:39.2px;top:359.9px;width:5.8px;font-family:'Liberation Sans', sans-serif;font-weight:400;font-size:10.5px;line-height:10.5px;color:#6db9a0;transform:scale(1.062,1.000) ;transform-origin:right 8.9px;">8</div>
<div class="t" style="left:74.9px;top:371.9px;width:20.4px;font-family:'Liberation Sans', sans-serif;font-weight:400;font-size:10.5px;line-height:10.5px;color:#6db9a0;transform:scale(1.101,1.000) ;transform-origin:left 8.9px;">88.0</div>
<div class="t" style="left:129.7px;top:371.9px;width:20.4px;font-family:'Liberation Sans', sans-serif;font-weight:400;font-size:10.5px;line-height:10.5px;color:#6db9a0;transform:scale(1.101,1.000) ;transform-origin:left 8.9px;">89.0</div>
<div class="t" style="left:184.4px;top:371.9px;width:20.4px;font-family:'Liberation Sans', sans-serif;font-weight:400;font-size:10.5px;line-height:10.5px;color:#6db9a0;transform:scale(1.101,1.000) ;transform-origin:left 8.9px;">90.0</div>
<div class="t" style="left:239.2px;top:371.9px;width:20.4px;font-family:'Liberation Sans', sans-serif;font-weight:400;font-size:10.5px;line-height:10.5px;color:#6db9a0;transform:scale(1.101,1.000) ;transform-origin:left 8.9px;">91.0</div>
<div class="t" style="left:293.9px;top:371.9px;width:20.4px;font-family:'Liberation Sans', sans-serif;font-weight:400;font-size:10.5px;line-height:10.5px;color:#6db9a0;transform:scale(1.101,1.000) ;transform-origin:left 8.9px;">92.0</div>
<div class="t" style="left:348.6px;top:371.9px;width:20.4px;font-family:'Liberation Sans', sans-serif;font-weight:400;font-size:10.5px;line-height:10.5px;color:#6db9a0;transform:scale(1.101,1.000) ;transform-origin:left 8.9px;">93.0</div>
<div class="t" style="left:403.4px;top:371.9px;width:20.4px;font-family:'Liberation Sans', sans-serif;font-weight:400;font-size:10.5px;line-height:10.5px;color:#6db9a0;transform:scale(1.101,1.000) ;transform-origin:left 8.9px;">94.0</div>
<div class="t" style="left:458.1px;top:371.9px;width:20.4px;font-family:'Liberation Sans', sans-serif;font-weight:400;font-size:10.5px;line-height:10.5px;color:#6db9a0;transform:scale(1.101,1.000) ;transform-origin:left 8.9px;">95.0</div>
<div class="t" style="left:512.9px;top:371.9px;width:20.4px;font-family:'Liberation Sans', sans-serif;font-weight:400;font-size:10.5px;line-height:10.5px;color:#6db9a0;transform:scale(1.101,1.000) ;transform-origin:left 8.9px;">96.0</div>
<div class="t" style="left:567.6px;top:371.9px;width:20.4px;font-family:'Liberation Sans', sans-serif;font-weight:400;font-size:10.5px;line-height:10.5px;color:#6db9a0;transform:scale(1.101,1.000) ;transform-origin:left 8.9px;">97.0</div>
<div class="t" style="left:622.4px;top:371.9px;width:20.4px;font-family:'Liberation Sans', sans-serif;font-weight:400;font-size:10.5px;line-height:10.5px;color:#6db9a0;transform:scale(1.101,1.000) ;transform-origin:left 8.9px;">98.0</div>
<div class="t" style="left:677.1px;top:371.9px;width:20.4px;font-family:'Liberation Sans', sans-serif;font-weight:400;font-size:10.5px;line-height:10.5px;color:#6db9a0;transform:scale(1.101,1.000) ;transform-origin:left 8.9px;">99.0</div>
<div class="t" style="left:731.9px;top:371.9px;width:26.3px;font-family:'Liberation Sans', sans-serif;font-weight:400;font-size:10.5px;line-height:10.5px;color:#6db9a0;transform:scale(1.066,1.000) ;transform-origin:left 8.9px;">100.0</div>
<div class="t" style="left:786.6px;top:371.9px;width:26.3px;font-family:'Liberation Sans', sans-serif;font-weight:400;font-size:10.5px;line-height:10.5px;color:#6db9a0;transform:scale(1.066,1.000) ;transform-origin:left 8.9px;">101.0</div>
<div class="t" style="left:841.4px;top:371.9px;width:26.3px;font-family:'Liberation Sans', sans-serif;font-weight:400;font-size:10.5px;line-height:10.5px;color:#6db9a0;transform:scale(1.066,1.000) ;transform-origin:left 8.9px;">102.0</div>
<div class="t" style="left:896.1px;top:371.9px;width:26.3px;font-family:'Liberation Sans', sans-serif;font-weight:400;font-size:10.5px;line-height:10.5px;color:#6db9a0;transform:scale(1.066,1.000) ;transform-origin:left 8.9px;">103.0</div>
<div class="t" style="left:950.9px;top:371.9px;width:26.3px;font-family:'Liberation Sans', sans-serif;font-weight:400;font-size:10.5px;line-height:10.5px;color:#6db9a0;transform:scale(1.066,1.000) ;transform-origin:left 8.9px;">104.0</div>
<div class="t" style="left:1005.6px;top:371.9px;width:26.3px;font-family:'Liberation Sans', sans-serif;font-weight:400;font-size:10.5px;line-height:10.5px;color:#6db9a0;transform:scale(1.066,1.000) ;transform-origin:left 8.9px;">105.0</div>
<div class="t" style="left:1060.4px;top:371.9px;width:26.3px;font-family:'Liberation Sans', sans-serif;font-weight:400;font-size:10.5px;line-height:10.5px;color:#6db9a0;transform:scale(1.066,1.000) ;transform-origin:left 8.9px;">106.0</div>
<div class="t" style="left:1115.2px;top:371.9px;width:26.3px;font-family:'Liberation Sans', sans-serif;font-weight:400;font-size:10.5px;line-height:10.5px;color:#6db9a0;transform:scale(1.066,1.000) ;transform-origin:left 8.9px;">107.0</div>
<div class="t" style="left:70.7px;top:256.7px;width:6.0px;font-family:'Liberation Sans', sans-serif;font-weight:400;font-size:9px;line-height:9px;color:#ffffff;transform:scale(0.916,1.000) ;transform-origin:center 7.6px;">S</div>
<div class="t" style="left:91.4px;top:263.4px;width:5.0px;font-family:'Liberation Sans', sans-serif;font-weight:400;font-size:9px;line-height:9px;color:#ffffff;">1</div>
<div class="t" style="left:115.3px;top:263.4px;width:5.0px;font-family:'Liberation Sans', sans-serif;font-weight:400;font-size:9px;line-height:9px;color:#ffffff;">3</div>
<div class="t" style="left:139.3px;top:263.4px;width:5.0px;font-family:'Liberation Sans', sans-serif;font-weight:400;font-size:9px;line-height:9px;color:#ffffff;">5</div>
<div class="t" style="left:163.2px;top:263.4px;width:5.0px;font-family:'Liberation Sans', sans-serif;font-weight:400;font-size:9px;line-height:9px;color:#ffffff;">7</div>
<div class="t" style="left:187.2px;top:263.4px;width:5.0px;font-family:'Liberation Sans', sans-serif;font-weight:400;font-size:9px;line-height:9px;color:#ffffff;">9</div>
<div class="t" style="left:199.7px;top:263.4px;width:15.3px;font-family:'Liberation Sans', sans-serif;font-weight:400;font-size:9px;line-height:9px;color:#ffffff;transform:scale(1.015,1.000) ;transform-origin:center 7.6px;">+10</div>
<div class="t" style="left:219.7px;top:263.4px;width:15.3px;font-family:'Liberation Sans', sans-serif;font-weight:400;font-size:9px;line-height:9px;color:#ffffff;transform:scale(1.015,1.000) ;transform-origin:center 7.6px;">+20</div>
<div class="t" style="left:239.7px;top:263.4px;width:15.3px;font-family:'Liberation Sans', sans-serif;font-weight:400;font-size:9px;line-height:9px;color:#ffffff;transform:scale(1.015,1.000) ;transform-origin:center 7.6px;">+30</div>
<div class="t" style="left:259.7px;top:263.4px;width:15.3px;font-family:'Liberation Sans', sans-serif;font-weight:400;font-size:9px;line-height:9px;color:#ffffff;transform:scale(1.015,1.000) ;transform-origin:center 7.6px;">+40</div>
<div class="t" style="left:279.7px;top:263.4px;width:15.3px;font-family:'Liberation Sans', sans-serif;font-weight:400;font-size:9px;line-height:9px;color:#ffffff;transform:scale(1.015,1.000) ;transform-origin:center 7.6px;">+50</div>
<div class="t" style="left:299.7px;top:263.4px;width:15.3px;font-family:'Liberation Sans', sans-serif;font-weight:400;font-size:9px;line-height:9px;color:#ffffff;transform:scale(1.015,1.000) ;transform-origin:center 7.6px;">+60</div>
<svg class="b" style="left:0;top:380px" width="1198" height="160" viewBox="0 380 1198 160">
<path d="M23.0,444.3 C23.9,443.3 27.1,439.5 28.4,438.4 C29.7,437.3 29.3,439.1 30.9,437.6 C32.4,436.1 35.5,431.3 37.5,429.2 C39.6,427.2 41.0,425.2 43.4,425.1 C45.8,424.9 49.0,427.3 51.7,428.4 C54.5,429.5 58.0,431.0 60.1,431.7 C62.2,432.4 62.7,433.0 64.3,432.6 C65.8,432.2 67.2,429.2 69.3,429.2 C71.4,429.2 75.0,432.3 76.8,432.6 C78.6,432.9 78.9,430.6 80.1,430.9 C81.4,431.2 82.8,433.8 84.3,434.2 C85.8,434.7 87.1,432.3 89.3,433.4 C91.5,434.5 94.9,439.4 97.6,440.9 C100.4,442.5 103.2,440.6 106.0,442.6 C108.8,444.5 111.4,453.2 114.3,452.6 C117.3,452.1 120.9,441.6 123.5,439.3 C126.2,436.9 127.7,442.3 130.2,438.4 C132.7,434.5 135.9,418.5 138.5,415.9 C141.2,413.2 144.0,421.9 146.1,422.6 C148.1,423.3 149.1,417.1 151.1,420.1 C153.0,423.0 155.9,436.2 157.7,440.1 C159.6,444.0 160.1,444.0 161.9,443.4 C163.7,442.9 166.4,435.4 168.6,436.8 C170.8,438.1 173.0,452.2 175.3,451.8 C177.5,451.4 180.1,437.3 182.0,434.2 C183.8,431.2 184.3,432.0 186.1,433.4 C187.9,434.8 190.6,443.2 192.8,442.6 C195.0,442.0 197.4,432.0 199.5,430.1 C201.5,428.1 203.3,429.7 205.0,430.9 C206.8,432.2 208.3,436.2 210.0,437.6 C211.7,439.0 212.8,439.5 215.0,439.3 C217.3,439.0 220.3,436.6 223.4,435.9 C226.4,435.2 229.6,436.3 233.4,435.1 C237.1,433.9 242.7,429.9 245.9,428.7 C249.1,427.6 249.7,427.2 252.6,428.1 C255.5,428.9 260.8,433.6 263.4,433.7 C266.1,433.9 266.8,430.5 268.4,429.2 C270.1,427.9 271.9,426.1 273.5,425.9 C275.0,425.7 276.1,428.0 277.6,428.1 C279.2,428.2 280.0,424.6 282.6,426.4 C285.3,428.2 290.6,436.7 293.5,438.8 C296.4,440.8 297.9,438.9 300.2,438.8 C302.4,438.6 304.3,440.0 306.8,438.1 C309.3,436.2 312.7,430.0 315.2,427.6 C317.7,425.2 319.1,423.8 321.9,423.7 C324.7,423.6 329.4,426.8 331.9,427.1 C334.4,427.3 335.2,425.1 336.9,425.1 C338.6,425.0 339.7,423.1 341.9,426.7 C344.1,430.4 347.9,441.9 350.3,446.8 C352.6,451.6 354.0,452.6 356.1,456.0 C358.2,459.3 360.7,465.7 362.8,466.8 C364.9,467.9 366.2,466.8 368.6,462.6 C371.0,458.5 374.2,448.4 377.0,441.8 C379.7,435.1 382.8,426.9 385.3,422.6 C387.8,418.2 389.5,418.0 392.0,415.9 C394.4,413.8 397.0,411.9 400.0,410.0 C403.0,408.2 404.5,405.4 410.0,404.7 C415.6,404.0 428.7,405.6 433.4,405.9 C438.1,406.1 436.0,406.4 438.4,406.4 C440.8,406.4 444.8,404.7 447.6,405.9 C450.4,407.0 452.2,409.6 455.1,413.4 C458.0,417.1 462.3,424.0 465.1,428.4 C467.9,432.9 469.8,437.7 471.8,440.1 C473.7,442.5 474.3,441.9 476.8,442.6 C479.3,443.3 484.0,443.9 486.8,444.3 C489.6,444.6 490.7,444.9 493.5,444.8 C496.3,444.6 501.0,443.9 503.5,443.4 C506.0,443.0 506.8,440.4 508.5,442.1 C510.2,443.8 511.9,451.7 513.5,453.4 C515.2,455.2 516.3,452.2 518.5,452.6 C520.8,453.0 524.9,455.8 526.9,456.0 C528.8,456.1 529.1,453.4 530.2,453.4 C531.3,453.4 532.2,457.5 533.6,456.0 C534.9,454.4 536.3,446.0 538.6,444.3 C540.8,442.5 544.4,446.4 546.9,445.4 C549.4,444.5 551.4,440.4 553.6,438.4 C555.8,436.4 558.0,434.7 560.3,433.4 C562.5,432.2 564.9,432.3 566.9,430.9 C569.0,429.5 570.3,425.8 572.8,425.1 C575.3,424.4 579.3,427.4 582.0,426.7 C584.6,426.0 585.6,422.7 588.6,420.9 C591.7,419.1 596.7,416.7 600.0,415.9 C603.3,415.1 605.3,416.6 608.3,415.9 C611.4,415.2 615.6,412.7 618.4,411.7 C621.1,410.7 622.5,410.7 625.0,409.7 C627.5,408.7 630.5,406.5 633.4,405.9 C636.3,405.2 639.8,405.0 642.6,405.9 C645.4,406.7 647.7,408.8 650.1,410.9 C652.4,413.0 654.4,415.9 656.8,418.4 C659.1,420.9 662.5,423.4 664.3,425.9 C666.1,428.4 666.4,432.4 667.6,433.4 C668.9,434.4 670.0,431.9 671.8,431.7 C673.6,431.6 675.8,431.4 678.5,432.6 C681.1,433.7 685.6,438.6 687.6,438.8 C689.7,439.0 689.7,433.7 691.0,433.7 C692.2,433.7 693.6,438.4 695.2,438.8 C696.7,439.1 698.8,437.2 700.2,435.9 C701.6,434.6 702.4,430.9 703.5,430.9 C704.6,430.9 705.2,431.6 706.8,435.9 C708.5,440.2 711.9,451.4 713.5,456.8 C715.2,462.2 715.2,464.0 716.9,468.5 C718.5,472.9 721.6,478.8 723.5,483.5 C725.5,488.2 726.9,495.5 728.5,496.9 C730.2,498.2 731.9,494.9 733.6,491.8 C735.2,488.8 736.8,482.8 738.6,478.5 C740.4,474.2 742.5,467.6 744.4,466.0 C746.4,464.3 747.6,468.8 750.3,468.5 C752.9,468.2 757.5,465.6 760.3,464.3 C763.0,463.0 765.3,462.8 766.9,461.0 C768.6,459.2 768.3,455.7 770.3,453.4 C772.2,451.2 776.7,449.6 778.6,447.6 C780.6,445.7 780.0,443.4 782.0,441.8 C783.9,440.1 788.0,438.8 790.3,437.6 C792.7,436.3 794.5,434.1 796.2,434.2 C797.8,434.4 798.7,435.9 800.0,438.4 C801.3,440.9 802.6,447.7 804.2,449.3 C805.7,450.8 807.2,446.5 809.2,447.6 C811.1,448.7 813.9,453.7 815.9,456.0 C817.8,458.2 819.1,462.4 820.9,461.0 C822.7,459.6 825.2,450.2 826.7,447.6 C828.2,445.0 828.9,445.4 830.1,445.4 C831.2,445.5 831.9,448.6 833.4,448.1 C834.9,447.6 837.1,443.7 839.2,442.6 C841.3,441.5 843.8,441.3 845.9,441.8 C848.0,442.2 850.1,444.1 851.8,445.1 C853.4,446.1 854.5,447.3 855.9,447.6 C857.3,447.9 858.7,447.9 860.1,446.8 C861.5,445.7 862.3,442.0 864.3,440.9 C866.2,439.8 869.1,440.2 871.8,440.1 C874.4,440.0 877.9,440.2 880.1,440.1 C882.4,440.0 883.5,438.4 885.1,439.3 C886.8,440.1 888.3,443.7 890.2,445.1 C892.0,446.5 894.0,448.4 896.0,447.6 C897.9,446.8 900.2,440.2 901.8,440.1 C903.5,440.0 904.5,444.1 906.0,446.8 C907.5,449.4 909.2,454.6 911.0,456.0 C912.8,457.3 915.3,455.8 916.9,455.1 C918.4,454.4 918.8,452.2 920.2,451.8 C921.6,451.4 923.5,454.8 925.2,452.6 C926.9,450.4 928.3,442.3 930.2,438.4 C932.2,434.5 934.9,429.4 936.9,429.2 C938.8,429.1 939.7,434.7 941.9,437.6 C944.1,440.5 947.2,443.8 950.3,446.8 C953.3,449.7 957.8,455.0 960.3,455.1 C962.8,455.3 962.5,449.9 965.3,447.6 C968.1,445.3 974.0,443.4 977.0,441.4 C979.9,439.5 980.3,436.7 982.8,435.9 C985.3,435.1 989.1,435.6 992.0,436.8 C994.9,437.9 997.0,442.0 1000.0,442.9 C1003.0,443.7 1006.9,442.4 1009.9,442.0 C1012.9,441.6 1015.7,441.1 1018.2,440.4 C1020.7,439.7 1022.9,437.3 1024.8,437.9 C1026.7,438.4 1027.3,443.3 1029.8,443.7 C1032.2,444.1 1037.1,441.9 1039.7,440.4 C1042.3,438.9 1043.8,435.3 1045.5,434.6 C1047.1,433.9 1048.2,437.3 1049.6,436.2 C1051.0,435.2 1052.1,429.2 1053.7,428.3 C1055.4,427.4 1057.4,430.3 1059.5,431.0 C1061.6,431.6 1064.6,431.1 1066.1,432.1 C1067.6,433.1 1067.5,436.8 1068.6,437.1 C1069.7,437.3 1070.7,434.4 1072.7,433.8 C1074.8,433.1 1078.8,433.6 1081.0,432.9 C1083.2,432.3 1084.6,430.1 1086.0,430.0 C1087.3,429.8 1088.0,431.7 1089.3,432.1 C1090.5,432.5 1092.3,431.1 1093.4,432.1 C1094.5,433.1 1094.1,435.8 1095.9,437.9 C1097.7,440.0 1101.8,443.3 1104.1,444.5 C1106.5,445.7 1107.4,447.4 1109.9,445.3 C1112.4,443.3 1116.7,434.0 1119.0,432.1 C1121.3,430.3 1122.5,433.9 1124.0,434.3 C1125.5,434.6 1126.7,433.6 1128.1,434.3 C1129.5,434.9 1131.0,437.5 1132.2,438.2 C1133.5,439.0 1133.9,437.7 1135.5,438.7 C1137.2,439.8 1140.2,445.1 1142.1,444.5 C1144.1,444.0 1145.5,438.2 1147.1,435.4 C1148.8,432.7 1150.7,428.4 1152.1,428.0 C1153.4,427.6 1154.3,429.4 1155.4,432.9 C1156.5,436.5 1157.2,447.3 1158.7,449.5 C1160.2,451.7 1162.8,445.9 1164.5,446.2 C1166.1,446.4 1167.4,449.5 1168.6,451.1 C1169.8,452.8 1170.7,454.7 1171.9,456.1 C1173.1,457.5 1174.9,460.2 1176.0,459.4 C1177.1,458.6 1177.7,454.6 1178.5,451.1 C1179.3,447.7 1180.6,440.8 1181.0,438.7 L1181,529 L23,529 Z" fill="#1d2124"/>
<line x1="64" y1="400.9" x2="1136" y2="400.9" stroke="rgba(255,255,255,0.045)" stroke-width="3"/>
<line x1="64" y1="460.0" x2="1136" y2="460.0" stroke="rgba(255,255,255,0.045)" stroke-width="3"/>
<line x1="64" y1="518.8" x2="1136" y2="518.8" stroke="rgba(255,255,255,0.045)" stroke-width="3"/>
<path d="M23.0,444.3 C23.9,443.3 27.1,439.5 28.4,438.4 C29.7,437.3 29.3,439.1 30.9,437.6 C32.4,436.1 35.5,431.3 37.5,429.2 C39.6,427.2 41.0,425.2 43.4,425.1 C45.8,424.9 49.0,427.3 51.7,428.4 C54.5,429.5 58.0,431.0 60.1,431.7 C62.2,432.4 62.7,433.0 64.3,432.6 C65.8,432.2 67.2,429.2 69.3,429.2 C71.4,429.2 75.0,432.3 76.8,432.6 C78.6,432.9 78.9,430.6 80.1,430.9 C81.4,431.2 82.8,433.8 84.3,434.2 C85.8,434.7 87.1,432.3 89.3,433.4 C91.5,434.5 94.9,439.4 97.6,440.9 C100.4,442.5 103.2,440.6 106.0,442.6 C108.8,444.5 111.4,453.2 114.3,452.6 C117.3,452.1 120.9,441.6 123.5,439.3 C126.2,436.9 127.7,442.3 130.2,438.4 C132.7,434.5 135.9,418.5 138.5,415.9 C141.2,413.2 144.0,421.9 146.1,422.6 C148.1,423.3 149.1,417.1 151.1,420.1 C153.0,423.0 155.9,436.2 157.7,440.1 C159.6,444.0 160.1,444.0 161.9,443.4 C163.7,442.9 166.4,435.4 168.6,436.8 C170.8,438.1 173.0,452.2 175.3,451.8 C177.5,451.4 180.1,437.3 182.0,434.2 C183.8,431.2 184.3,432.0 186.1,433.4 C187.9,434.8 190.6,443.2 192.8,442.6 C195.0,442.0 197.4,432.0 199.5,430.1 C201.5,428.1 203.3,429.7 205.0,430.9 C206.8,432.2 208.3,436.2 210.0,437.6 C211.7,439.0 212.8,439.5 215.0,439.3 C217.3,439.0 220.3,436.6 223.4,435.9 C226.4,435.2 229.6,436.3 233.4,435.1 C237.1,433.9 242.7,429.9 245.9,428.7 C249.1,427.6 249.7,427.2 252.6,428.1 C255.5,428.9 260.8,433.6 263.4,433.7 C266.1,433.9 266.8,430.5 268.4,429.2 C270.1,427.9 271.9,426.1 273.5,425.9 C275.0,425.7 276.1,428.0 277.6,428.1 C279.2,428.2 280.0,424.6 282.6,426.4 C285.3,428.2 290.6,436.7 293.5,438.8 C296.4,440.8 297.9,438.9 300.2,438.8 C302.4,438.6 304.3,440.0 306.8,438.1 C309.3,436.2 312.7,430.0 315.2,427.6 C317.7,425.2 319.1,423.8 321.9,423.7 C324.7,423.6 329.4,426.8 331.9,427.1 C334.4,427.3 335.2,425.1 336.9,425.1 C338.6,425.0 339.7,423.1 341.9,426.7 C344.1,430.4 347.9,441.9 350.3,446.8 C352.6,451.6 354.0,452.6 356.1,456.0 C358.2,459.3 360.7,465.7 362.8,466.8 C364.9,467.9 366.2,466.8 368.6,462.6 C371.0,458.5 374.2,448.4 377.0,441.8 C379.7,435.1 382.8,426.9 385.3,422.6 C387.8,418.2 389.5,418.0 392.0,415.9 C394.4,413.8 397.0,411.9 400.0,410.0 C403.0,408.2 404.5,405.4 410.0,404.7 C415.6,404.0 428.7,405.6 433.4,405.9 C438.1,406.1 436.0,406.4 438.4,406.4 C440.8,406.4 444.8,404.7 447.6,405.9 C450.4,407.0 452.2,409.6 455.1,413.4 C458.0,417.1 462.3,424.0 465.1,428.4 C467.9,432.9 469.8,437.7 471.8,440.1 C473.7,442.5 474.3,441.9 476.8,442.6 C479.3,443.3 484.0,443.9 486.8,444.3 C489.6,444.6 490.7,444.9 493.5,444.8 C496.3,444.6 501.0,443.9 503.5,443.4 C506.0,443.0 506.8,440.4 508.5,442.1 C510.2,443.8 511.9,451.7 513.5,453.4 C515.2,455.2 516.3,452.2 518.5,452.6 C520.8,453.0 524.9,455.8 526.9,456.0 C528.8,456.1 529.1,453.4 530.2,453.4 C531.3,453.4 532.2,457.5 533.6,456.0 C534.9,454.4 536.3,446.0 538.6,444.3 C540.8,442.5 544.4,446.4 546.9,445.4 C549.4,444.5 551.4,440.4 553.6,438.4 C555.8,436.4 558.0,434.7 560.3,433.4 C562.5,432.2 564.9,432.3 566.9,430.9 C569.0,429.5 570.3,425.8 572.8,425.1 C575.3,424.4 579.3,427.4 582.0,426.7 C584.6,426.0 585.6,422.7 588.6,420.9 C591.7,419.1 596.7,416.7 600.0,415.9 C603.3,415.1 605.3,416.6 608.3,415.9 C611.4,415.2 615.6,412.7 618.4,411.7 C621.1,410.7 622.5,410.7 625.0,409.7 C627.5,408.7 630.5,406.5 633.4,405.9 C636.3,405.2 639.8,405.0 642.6,405.9 C645.4,406.7 647.7,408.8 650.1,410.9 C652.4,413.0 654.4,415.9 656.8,418.4 C659.1,420.9 662.5,423.4 664.3,425.9 C666.1,428.4 666.4,432.4 667.6,433.4 C668.9,434.4 670.0,431.9 671.8,431.7 C673.6,431.6 675.8,431.4 678.5,432.6 C681.1,433.7 685.6,438.6 687.6,438.8 C689.7,439.0 689.7,433.7 691.0,433.7 C692.2,433.7 693.6,438.4 695.2,438.8 C696.7,439.1 698.8,437.2 700.2,435.9 C701.6,434.6 702.4,430.9 703.5,430.9 C704.6,430.9 705.2,431.6 706.8,435.9 C708.5,440.2 711.9,451.4 713.5,456.8 C715.2,462.2 715.2,464.0 716.9,468.5 C718.5,472.9 721.6,478.8 723.5,483.5 C725.5,488.2 726.9,495.5 728.5,496.9 C730.2,498.2 731.9,494.9 733.6,491.8 C735.2,488.8 736.8,482.8 738.6,478.5 C740.4,474.2 742.5,467.6 744.4,466.0 C746.4,464.3 747.6,468.8 750.3,468.5 C752.9,468.2 757.5,465.6 760.3,464.3 C763.0,463.0 765.3,462.8 766.9,461.0 C768.6,459.2 768.3,455.7 770.3,453.4 C772.2,451.2 776.7,449.6 778.6,447.6 C780.6,445.7 780.0,443.4 782.0,441.8 C783.9,440.1 788.0,438.8 790.3,437.6 C792.7,436.3 794.5,434.1 796.2,434.2 C797.8,434.4 798.7,435.9 800.0,438.4 C801.3,440.9 802.6,447.7 804.2,449.3 C805.7,450.8 807.2,446.5 809.2,447.6 C811.1,448.7 813.9,453.7 815.9,456.0 C817.8,458.2 819.1,462.4 820.9,461.0 C822.7,459.6 825.2,450.2 826.7,447.6 C828.2,445.0 828.9,445.4 830.1,445.4 C831.2,445.5 831.9,448.6 833.4,448.1 C834.9,447.6 837.1,443.7 839.2,442.6 C841.3,441.5 843.8,441.3 845.9,441.8 C848.0,442.2 850.1,444.1 851.8,445.1 C853.4,446.1 854.5,447.3 855.9,447.6 C857.3,447.9 858.7,447.9 860.1,446.8 C861.5,445.7 862.3,442.0 864.3,440.9 C866.2,439.8 869.1,440.2 871.8,440.1 C874.4,440.0 877.9,440.2 880.1,440.1 C882.4,440.0 883.5,438.4 885.1,439.3 C886.8,440.1 888.3,443.7 890.2,445.1 C892.0,446.5 894.0,448.4 896.0,447.6 C897.9,446.8 900.2,440.2 901.8,440.1 C903.5,440.0 904.5,444.1 906.0,446.8 C907.5,449.4 909.2,454.6 911.0,456.0 C912.8,457.3 915.3,455.8 916.9,455.1 C918.4,454.4 918.8,452.2 920.2,451.8 C921.6,451.4 923.5,454.8 925.2,452.6 C926.9,450.4 928.3,442.3 930.2,438.4 C932.2,434.5 934.9,429.4 936.9,429.2 C938.8,429.1 939.7,434.7 941.9,437.6 C944.1,440.5 947.2,443.8 950.3,446.8 C953.3,449.7 957.8,455.0 960.3,455.1 C962.8,455.3 962.5,449.9 965.3,447.6 C968.1,445.3 974.0,443.4 977.0,441.4 C979.9,439.5 980.3,436.7 982.8,435.9 C985.3,435.1 989.1,435.6 992.0,436.8 C994.9,437.9 997.0,442.0 1000.0,442.9 C1003.0,443.7 1006.9,442.4 1009.9,442.0 C1012.9,441.6 1015.7,441.1 1018.2,440.4 C1020.7,439.7 1022.9,437.3 1024.8,437.9 C1026.7,438.4 1027.3,443.3 1029.8,443.7 C1032.2,444.1 1037.1,441.9 1039.7,440.4 C1042.3,438.9 1043.8,435.3 1045.5,434.6 C1047.1,433.9 1048.2,437.3 1049.6,436.2 C1051.0,435.2 1052.1,429.2 1053.7,428.3 C1055.4,427.4 1057.4,430.3 1059.5,431.0 C1061.6,431.6 1064.6,431.1 1066.1,432.1 C1067.6,433.1 1067.5,436.8 1068.6,437.1 C1069.7,437.3 1070.7,434.4 1072.7,433.8 C1074.8,433.1 1078.8,433.6 1081.0,432.9 C1083.2,432.3 1084.6,430.1 1086.0,430.0 C1087.3,429.8 1088.0,431.7 1089.3,432.1 C1090.5,432.5 1092.3,431.1 1093.4,432.1 C1094.5,433.1 1094.1,435.8 1095.9,437.9 C1097.7,440.0 1101.8,443.3 1104.1,444.5 C1106.5,445.7 1107.4,447.4 1109.9,445.3 C1112.4,443.3 1116.7,434.0 1119.0,432.1 C1121.3,430.3 1122.5,433.9 1124.0,434.3 C1125.5,434.6 1126.7,433.6 1128.1,434.3 C1129.5,434.9 1131.0,437.5 1132.2,438.2 C1133.5,439.0 1133.9,437.7 1135.5,438.7 C1137.2,439.8 1140.2,445.1 1142.1,444.5 C1144.1,444.0 1145.5,438.2 1147.1,435.4 C1148.8,432.7 1150.7,428.4 1152.1,428.0 C1153.4,427.6 1154.3,429.4 1155.4,432.9 C1156.5,436.5 1157.2,447.3 1158.7,449.5 C1160.2,451.7 1162.8,445.9 1164.5,446.2 C1166.1,446.4 1167.4,449.5 1168.6,451.1 C1169.8,452.8 1170.7,454.7 1171.9,456.1 C1173.1,457.5 1174.9,460.2 1176.0,459.4 C1177.1,458.6 1177.7,454.6 1178.5,451.1 C1179.3,447.7 1180.6,440.8 1181.0,438.7" fill="none" stroke="#5ec19c" stroke-width="2.2" stroke-linejoin="round" stroke-linecap="round"/>
</svg>
<div class="t" style="left:37.5px;top:394.9px;width:21.4px;font-family:'Liberation Sans', sans-serif;font-weight:400;font-size:11px;line-height:11px;color:#5fb898;transform:scale(1.051,1.000) ;transform-origin:left 9.3px;">32.0</div>
<div class="t" style="left:1143.8px;top:394.9px;width:21.4px;font-family:'Liberation Sans', sans-serif;font-weight:400;font-size:11px;line-height:11px;color:#5fb898;transform:scale(1.074,1.000) ;transform-origin:left 9.3px;">32.0</div>
<div class="t" style="left:37.5px;top:454.3px;width:21.4px;font-family:'Liberation Sans', sans-serif;font-weight:400;font-size:11px;line-height:11px;color:#5fb898;transform:scale(1.051,1.000) ;transform-origin:left 9.3px;">30.0</div>
<div class="t" style="left:1143.8px;top:454.3px;width:21.4px;font-family:'Liberation Sans', sans-serif;font-weight:400;font-size:11px;line-height:11px;color:#5fb898;transform:scale(1.074,1.000) ;transform-origin:left 9.3px;">30.0</div>
<div class="t" style="left:37.5px;top:513.5px;width:21.4px;font-family:'Liberation Sans', sans-serif;font-weight:400;font-size:11px;line-height:11px;color:#5fb898;transform:scale(1.051,1.000) ;transform-origin:left 9.3px;">28.0</div>
<div class="t" style="left:1143.8px;top:513.5px;width:21.4px;font-family:'Liberation Sans', sans-serif;font-weight:400;font-size:11px;line-height:11px;color:#5fb898;transform:scale(1.074,1.000) ;transform-origin:left 9.3px;">28.0</div>
<div class="b" style="left:22px;top:550px;width:80px;height:90px;background:#4fb58e;border-radius:12px;"></div>
<div class="b" style="left:56px;top:588px;width:13.5px;height:13.5px;background:#1a2924;border-radius:2.5px;"></div>
<div class="b" style="left:122px;top:550px;width:355px;height:90px;background:#1e2226;border-radius:13px;"></div>
<div class="t" style="left:174.2px;top:573.7px;width:249.6px;font-family:'Liberation Mono', monospace;font-weight:400;font-size:52px;line-height:52px;color:#b5b9bb;transform:scale(1.001,1.120) ;transform-origin:center 39.8px;"><span style="color:#b5b9bb;-webkit-text-stroke:1.5px #b5b9bb">CH</span><span style="color:#fff;-webkit-text-stroke:1.5px #fff">ER</span><span style="color:#b5b9bb;-webkit-text-stroke:1.5px #b5b9bb">KA_S</span></div>
<div class="b" style="left:495px;top:550px;width:215px;height:90px;background:#233631;border-radius:12px;"></div>
<svg class="b" style="left:572px;top:565px" width="60" height="60" viewBox="0 0 60 60"><circle cx="30" cy="30" r="14.4" fill="#a6e38f"/><circle cx="30" cy="30" r="7" fill="#f4fff0"/><path d="M16.4,16 A19.5,19.5 0 0 0 16.4,44" fill="none" stroke="#ffffff" stroke-width="3.6" stroke-linecap="round"/><path d="M43.6,16 A19.5,19.5 0 0 1 43.6,44" fill="none" stroke="#ffffff" stroke-width="3.6" stroke-linecap="round"/><path d="M5.7,20.8 A26,26 0 0 0 5.7,39.2" fill="none" stroke="#c4ec7e" stroke-width="3.6" stroke-linecap="round"/><path d="M54.3,20.8 A26,26 0 0 1 54.3,39.2" fill="none" stroke="#9ed8a6" stroke-width="3.6" stroke-linecap="round"/></svg>
<div class="b" style="left:730px;top:550px;width:334px;height:90px;background:#233631;border-radius:12px;"></div>
<div class="t" style="left:867.8px;top:565.9px;width:58.8px;font-family:'Liberation Sans', sans-serif;font-weight:700;font-size:22.5px;line-height:22.5px;color:#56bc96;transform:scale(0.970,1.000) ;transform-origin:center 19.1px;-webkit-text-stroke:0.7px currentColor;">News</div>
<div class="t" style="left:795.6px;top:601.9px;width:28.1px;font-family:'Liberation Sans', sans-serif;font-weight:700;font-size:22px;line-height:22px;color:#7e8b89;transform:scale(0.872,1.000) ;transform-origin:center 18.6px;-webkit-text-stroke:0.7px currentColor;">TP</div>
<div class="t" style="left:834.4px;top:601.9px;width:29.3px;font-family:'Liberation Sans', sans-serif;font-weight:700;font-size:22px;line-height:22px;color:#7e8b89;transform:scale(0.829,1.000) ;transform-origin:center 18.6px;-webkit-text-stroke:0.7px currentColor;">TA</div>
<svg class="b" style="left:922px;top:601px" width="30" height="24" viewBox="0 0 30 24"><circle cx="10.2" cy="12" r="7.2" fill="none" stroke="#fff" stroke-width="2.4"/><circle cx="19.8" cy="12" r="7.2" fill="none" stroke="#fff" stroke-width="2.4"/></svg>
<div class="t" style="left:964.1px;top:601.9px;width:33.0px;font-family:'Liberation Sans', sans-serif;font-weight:700;font-size:22px;line-height:22px;color:#7e8b89;transform:scale(0.885,1.000) ;transform-origin:center 18.6px;-webkit-text-stroke:0.7px currentColor;"><span style="color:#7e8b89">M</span><span style="color:#fff">S</span></div>
<div class="b" style="left:1084px;top:550px;width:98px;height:420px;background:#1e2226;border-radius:13px;"></div>
<div class="t" style="left:1118.3px;top:565.7px;width:29.3px;font-family:'Liberation Sans', sans-serif;font-weight:700;font-size:22px;line-height:22px;color:#56bc96;transform:scale(0.921,1.000) ;transform-origin:center 18.6px;-webkit-text-stroke:0.7px currentColor;">AF</div>
<div class="t" style="left:1119.4px;top:608.7px;width:27.2px;font-family:'Liberation Sans', sans-serif;font-weight:400;font-size:14px;line-height:14px;color:#f4f4f4;transform:scale(0.954,1.000) ;transform-origin:center 11.9px;">96.0</div>
<div class="t" style="left:1119.4px;top:629.9px;width:27.2px;font-family:'Liberation Sans', sans-serif;font-weight:400;font-size:14px;line-height:14px;color:#f4f4f4;transform:scale(0.954,1.000) ;transform-origin:center 11.9px;">99.3</div>
<div class="t" style="left:1115.5px;top:651.1px;width:35.0px;font-family:'Liberation Sans', sans-serif;font-weight:400;font-size:14px;line-height:14px;color:#f4f4f4;transform:scale(0.928,1.000) ;transform-origin:center 11.9px;">102.7</div>
<div class="t" style="left:1115.5px;top:672.3px;width:35.0px;font-family:'Liberation Sans', sans-serif;font-weight:400;font-size:14px;line-height:14px;color:#f4f4f4;transform:scale(0.928,1.000) ;transform-origin:center 11.9px;">103.4</div>
<div class="t" style="left:1115.5px;top:693.5px;width:35.0px;font-family:'Liberation Sans', sans-serif;font-weight:400;font-size:14px;line-height:14px;color:#f4f4f4;transform:scale(0.928,1.000) ;transform-origin:center 11.9px;">103.5</div>
<div class="t" style="left:1115.5px;top:714.7px;width:35.0px;font-family:'Liberation Sans', sans-serif;font-weight:400;font-size:14px;line-height:14px;color:#f4f4f4;transform:scale(0.928,1.000) ;transform-origin:center 11.9px;">104.6</div>
<div class="t" style="left:1115.5px;top:735.9px;width:35.0px;font-family:'Liberation Sans', sans-serif;font-weight:400;font-size:14px;line-height:14px;color:#f4f4f4;transform:scale(0.928,1.000) ;transform-origin:center 11.9px;">106.6</div>
<div class="b" style="left:22px;top:660px;width:334px;height:122px;background:#1e2226;border-radius:13px;"></div>
<div class="b" style="left:376px;top:660px;width:334px;height:122px;background:#1e2226;border-radius:13px;"></div>
<div class="b" style="left:730px;top:660px;width:334px;height:122px;background:#1e2226;border-radius:13px;"></div>
<div class="t" style="left:142.3px;top:675.5px;width:94.6px;font-family:'Liberation Sans', sans-serif;font-weight:700;font-size:23px;line-height:23px;color:#56bc96;transform:scale(0.874,1.000) ;transform-origin:center 19.5px;-webkit-text-stroke:0.7px currentColor;">PI CODE</div>
<div class="t" style="left:131.3px;top:722.4px;width:114.8px;font-family:'Liberation Sans', sans-serif;font-weight:400;font-size:48px;line-height:48px;color:#ffffff;transform:scale(1.023,1.000) ;transform-origin:center 40.6px;-webkit-text-stroke:0.7px #1e2226;">62D3</div>
<div class="t" style="left:470.8px;top:675.5px;width:144.4px;font-family:'Liberation Sans', sans-serif;font-weight:700;font-size:23px;line-height:23px;color:#56bc96;transform:scale(0.884,1.000) ;transform-origin:center 19.5px;-webkit-text-stroke:0.7px currentColor;">FREQUENCY</div>
<div class="t" style="left:520.0px;top:709.6px;width:47.0px;font-family:'Liberation Sans', sans-serif;font-weight:400;font-size:13px;line-height:13px;color:#b9bdbf;transform:scale(0.947,1.000) ;transform-origin:center 11.0px;">103.200</div>
<div class="t" style="left:457.7px;top:722.1px;width:173.5px;font-family:'Liberation Sans', sans-serif;font-weight:400;font-size:48px;line-height:48px;color:#ffffff;transform:scale(1.032,1.000) ;transform-origin:center 40.6px;-webkit-text-stroke:0.7px #1e2226;">103.300</div>
<div class="t" style="left:853.1px;top:675.5px;width:86.9px;font-family:'Liberation Sans', sans-serif;font-weight:700;font-size:23px;line-height:23px;color:#56bc96;transform:scale(0.882,1.000) ;transform-origin:center 19.5px;-webkit-text-stroke:0.7px currentColor;">SIGNAL</div>
<svg class="b" style="left:865px;top:708px" width="12" height="13" viewBox="0 0 12 13"><path d="M6,2 L6,12 M1.8,6 L6,1.8 L10.2,6" fill="none" stroke="#c8cccd" stroke-width="1.8"/></svg>
<div class="t" style="left:880.2px;top:708.8px;width:48.4px;font-family:'Liberation Sans', sans-serif;font-weight:400;font-size:13px;line-height:13px;color:#c4c8ca;transform:scale(0.971,1.000) ;transform-origin:left 11.0px;">31.7 dBf</div>
<div class="t" style="left:829.7px;top:722.1px;width:93.4px;font-family:'Liberation Sans', sans-serif;font-weight:400;font-size:48px;line-height:48px;color:#ffffff;transform:scale(0.948,1.000) ;transform-origin:left 40.6px;-webkit-text-stroke:0.7px #1e2226;"><span>30.</span><span style="color:#b9bdbf">4</span></div>
<div class="t" style="left:931.5px;top:741.5px;width:37.5px;font-family:'Liberation Sans', sans-serif;font-weight:400;font-size:25px;line-height:25px;color:#9da2a4;transform:scale(0.933,1.000) ;transform-origin:left 21.2px;-webkit-text-stroke:0.7px #1e2226;">dBf</div>
<div class="b" style="left:22px;top:803px;width:106px;height:48px;background:#4fb58e;border-radius:12px;"></div>
<div class="t" style="left:31.6px;top:820.8px;width:36.6px;font-family:'Liberation Sans', sans-serif;font-weight:400;font-size:14px;line-height:14px;color:#1b3a30;transform:scale(0.902,1.000) ;transform-origin:left 11.9px;">South</div>
<svg class="b" style="left:107.5px;top:822px" width="14" height="10" viewBox="0 0 14 10"><path d="M2.5,2.5 L7,7 L11.5,2.5" fill="none" stroke="#1b3a30" stroke-width="1.8" stroke-linecap="round"/></svg>
<div class="b" style="left:143px;top:803px;width:213px;height:48px;background:#4fb58e;border-radius:12px;"></div>
<div class="t" style="left:182.3px;top:820.8px;width:28.0px;font-family:'Liberation Sans', sans-serif;font-weight:700;font-size:14px;line-height:14px;color:#1a2f28;transform:scale(0.760,1.000) ;transform-origin:center 11.9px;-webkit-text-stroke:0.4px currentColor;">cEQ</div>
<div class="t" style="left:290.6px;top:820.8px;width:24.9px;font-family:'Liberation Sans', sans-serif;font-weight:700;font-size:14px;line-height:14px;color:#1a2f28;transform:scale(0.856,1.000) ;transform-origin:center 11.9px;-webkit-text-stroke:0.4px currentColor;">iMS</div>
<div class="b" style="left:376px;top:803px;width:83px;height:48px;background:#4fb58e;border-radius:12px 0 0 12px"></div>
<div class="b" style="left:459px;top:803px;width:167px;height:48px;background:#1e2226;"></div>
<div class="b" style="left:626px;top:803px;width:84px;height:48px;background:#4fb58e;border-radius:0 12px 12px 0"></div>
<div class="t" style="left:481.6px;top:821.7px;width:66.1px;font-family:'Liberation Sans', sans-serif;font-weight:400;font-size:14px;line-height:14px;color:#a2a6a8;transform:scale(0.862,1.000) ;transform-origin:left 11.9px;">Frequency</div>
<svg class="b" style="left:409px;top:818px" width="16" height="18" viewBox="0 0 16 18"><path d="M11,3.5 L5,9 L11,14.5" fill="none" stroke="#1b3a30" stroke-width="2" stroke-linecap="round"/></svg>
<svg class="b" style="left:661px;top:818px" width="16" height="18" viewBox="0 0 16 18"><path d="M5,3.5 L11,9 L5,14.5" fill="none" stroke="#1b3a30" stroke-width="2" stroke-linecap="round"/></svg>
<div class="b" style="left:730px;top:803px;width:178px;height:48px;background:#4fb58e;border-radius:12px;"></div>
<div class="b" style="left:859px;top:803px;width:49px;height:48px;background:#58d2a8;border-radius:12px"></div>
<svg class="b" style="left:873px;top:818px" width="22" height="18" viewBox="0 0 22 18"><path d="M2,6.5 L6,6.5 L11,2.5 L11,15.5 L6,11.5 L2,11.5 Z" fill="#48a987"/><path d="M13.5,6 Q15,9 13.5,12 M16,4 Q18.8,9 16,14 M18.5,2.2 Q22,9 18.5,15.8" fill="none" stroke="#48a987" stroke-width="1.5" stroke-linecap="round"/></svg>
<div class="b" style="left:923px;top:803px;width:79px;height:48px;background:#4fb58e;border-radius:12px;"></div>
<div class="t" style="left:932.4px;top:820.8px;width:28.8px;font-family:'Liberation Sans', sans-serif;font-weight:400;font-size:14px;line-height:14px;color:#1b3a30;transform:scale(0.920,1.000) ;transform-origin:left 11.9px;">Auto</div>
<svg class="b" style="left:981.5px;top:822px" width="14" height="10" viewBox="0 0 14 10"><path d="M2.5,2.5 L7,7 L11.5,2.5" fill="none" stroke="#1b3a30" stroke-width="1.8" stroke-linecap="round"/></svg>
<div class="b" style="left:1017px;top:803px;width:47px;height:48px;background:#4fb58e;border-radius:12px;"></div>
<svg class="b" style="left:1030px;top:817px" width="20" height="20" viewBox="0 0 20 20"><rect x="3" y="2" width="2.6" height="16" rx="1" fill="#1b3a30"/><path d="M5,3 Q8,1.8 11,3.2 Q14,4.5 17.5,3 L17.5,11 Q14,12.5 11,11.2 Q8,9.8 5,11 Z" fill="#1b3a30"/></svg>
<div class="b" style="left:22px;top:871px;width:688px;height:100px;background:#1e2226;border-radius:13px;"></div>
<div class="t" style="left:300.0px;top:882.8px;width:132.9px;font-family:'Liberation Sans', sans-serif;font-weight:700;font-size:23px;line-height:23px;color:#56bc96;transform:scale(0.884,1.000) ;transform-origin:center 19.5px;-webkit-text-stroke:0.7px currentColor;">RADIOTEXT</div>
<div class="t" style="left:97.0px;top:916.0px;width:67.2px;font-family:'Liberation Mono', monospace;font-weight:400;font-size:14px;line-height:14px;color:#ffffff;transform:scale(0.997,1.120) ;transform-origin:left 10.7px;-webkit-text-stroke:0.3px #fff;">RADIO NV</div>
<div class="b" style="left:730px;top:871px;width:334px;height:100px;background:#1e2226;border-radius:13px;"></div>
<div class="b" style="left:741px;top:933px;width:323px;height:1px;background:rgba(150,190,160,0.09);"></div>
<div class="t" style="left:858.3px;top:881.1px;width:86.7px;font-family:'Liberation Sans', sans-serif;font-weight:700;font-size:19.5px;line-height:19.5px;color:#56bc96;transform:scale(0.785,1.000) ;transform-origin:center 16.5px;-webkit-text-stroke:0.7px currentColor;">Radio NV</div>
<div class="t" style="left:848.6px;top:916.2px;width:67.6px;font-family:'Liberation Sans', sans-serif;font-weight:400;font-size:16px;line-height:16px;color:#f0f0f0;transform:scale(0.903,1.000) ;transform-origin:left 13.5px;">Cherkasy</div>
<div class="t" style="left:913.5px;top:918.7px;width:34.7px;font-family:'Liberation Sans', sans-serif;font-weight:400;font-size:13px;line-height:13px;color:#c0c4c6;transform:scale(0.923,1.000) ;transform-origin:left 11.0px;">[UKR]</div>
<div class="t" style="left:819.5px;top:944.3px;width:153.2px;font-family:'Liberation Sans', sans-serif;font-weight:400;font-size:14px;line-height:14px;color:#e6e8e8;transform:scale(0.917,1.000) ;transform-origin:center 11.9px;">5 kW [V] ▪ 176 km ▪ 135°</div>
<div class="b" style="left:22.5px;top:991px;width:105px;height:48px;background:#1e2226;border-radius:11px;"></div>
<div class="b" style="left:139.3px;top:991px;width:105px;height:48px;background:#1e2226;border-radius:11px;"></div>
<div class="b" style="left:256px;top:991px;width:105px;height:48px;background:#1e2226;border-radius:11px;"></div>
<div class="b" style="left:374.5px;top:991px;width:105px;height:48px;background:#1e2226;border-radius:11px;"></div>
<div class="b" style="left:491.8px;top:991px;width:105px;height:48px;background:#1e2226;border-radius:11px;"></div>
<div class="b" style="left:608.4px;top:991px;width:105px;height:48px;background:#1e2226;border-radius:11px;"></div>
<div class="b" style="left:726px;top:991px;width:105px;height:48px;background:#1e2226;border-radius:11px;"></div>
<div class="b" style="left:842.8px;top:991px;width:105px;height:48px;background:#1e2226;border-radius:11px;"></div>
<div class="b" style="left:960.5px;top:991px;width:105px;height:48px;background:#1e2226;border-radius:11px;"></div>
<div class="b" style="left:1077.5px;top:991px;width:105px;height:48px;background:#1e2226;border-radius:11px;"></div>
<div class="t" style="left:54.2px;top:1001.3px;width:42.0px;font-family:'Liberation Mono', monospace;font-weight:400;font-size:14px;line-height:14px;color:#ffffff;transform:scale(0.981,1.120) ;transform-origin:left 10.7px;-webkit-text-stroke:0.3px #fff;">102.2</div>
<svg class="b" style="left:99.5px;top:998px" width="18" height="10" viewBox="0 0 18 10"><path d="M0.8,0.5 L0.8,3.5 M11.2,0.5 L11.2,3.5" stroke="#fff" stroke-width="1.1"/><path d="M1.5,1.5 L10.5,1.5" stroke="#fff" stroke-width="1" stroke-dasharray="1 1"/><path d="M6,1.5 L6,8.5" stroke="#fff" stroke-width="2"/><path d="M13.8,2.5 L15.2,1.2 L15.2,8.5" fill="none" stroke="#fff" stroke-width="1.3"/></svg>
<div class="t" style="left:54.2px;top:1019.3px;width:42.0px;font-family:'Liberation Mono', monospace;font-weight:700;font-size:14px;line-height:14px;color:#ffffff;transform:scale(0.981,1.120) ;transform-origin:left 10.7px;">71006</div>
<svg class="b" style="left:158.5px;top:987px" width="68" height="56" viewBox="0 0 68 56"><circle cx="34" cy="28" r="11" fill="none" stroke="#2e3935" stroke-width="3.5"/><path d="M22,12 A20,20 0 0 0 22,44 M46,12 A20,20 0 0 1 46,44" fill="none" stroke="#2e3935" stroke-width="3.5" stroke-linecap="round"/><path d="M12,17 A28,28 0 0 0 12,39 M56,17 A28,28 0 0 1 56,39" fill="none" stroke="#2e3935" stroke-width="3.5" stroke-linecap="round"/></svg>
<div class="t" style="left:175.8px;top:1010.6px;width:33.6px;font-family:'Liberation Mono', monospace;font-weight:400;font-size:14px;line-height:14px;color:#ffffff;transform:scale(0.964,1.120) ;transform-origin:left 10.7px;-webkit-text-stroke:0.3px #fff;">87.8</div>
<svg class="b" style="left:213px;top:1007px" width="18" height="10" viewBox="0 0 18 10"><path d="M0.8,0.5 L0.8,3.5 M11.2,0.5 L11.2,3.5" stroke="#fff" stroke-width="1.1"/><path d="M1.5,1.5 L10.5,1.5" stroke="#fff" stroke-width="1" stroke-dasharray="1 1"/><path d="M6,1.5 L6,8.5" stroke="#fff" stroke-width="2"/><path d="M13.8,2.5 L15.2,1.2 L15.2,8.5" fill="none" stroke="#fff" stroke-width="1.3"/></svg>
<svg class="b" style="left:273px;top:987px" width="68" height="56" viewBox="0 0 68 56"><circle cx="34" cy="28" r="11" fill="none" stroke="#2e3935" stroke-width="3.5"/><path d="M22,12 A20,20 0 0 0 22,44 M46,12 A20,20 0 0 1 46,44" fill="none" stroke="#2e3935" stroke-width="3.5" stroke-linecap="round"/><path d="M12,17 A28,28 0 0 0 12,39 M56,17 A28,28 0 0 1 56,39" fill="none" stroke="#2e3935" stroke-width="3.5" stroke-linecap="round"/></svg>
<div class="t" style="left:288.8px;top:1010.6px;width:42.0px;font-family:'Liberation Mono', monospace;font-weight:400;font-size:14px;line-height:14px;color:#ffffff;transform:scale(0.967,1.120) ;transform-origin:left 10.7px;-webkit-text-stroke:0.3px #fff;">105.2</div>
<svg class="b" style="left:334px;top:1007px" width="18" height="10" viewBox="0 0 18 10"><path d="M0.8,0.5 L0.8,3.5 M11.2,0.5 L11.2,3.5" stroke="#fff" stroke-width="1.1"/><path d="M1.5,1.5 L10.5,1.5" stroke="#fff" stroke-width="1" stroke-dasharray="1 1"/><path d="M6,1.5 L6,8.5" stroke="#fff" stroke-width="2"/><path d="M13.8,2.5 L15.2,1.2 L15.2,8.5" fill="none" stroke="#fff" stroke-width="1.3"/></svg>
<div class="t" style="left:409.9px;top:1001.2px;width:33.6px;font-family:'Liberation Mono', monospace;font-weight:400;font-size:14px;line-height:14px;color:#ffffff;transform:scale(0.934,1.120) ;transform-origin:left 10.7px;-webkit-text-stroke:0.3px #fff;">89.7</div>
<svg class="b" style="left:446px;top:998px" width="18" height="10" viewBox="0 0 18 10"><path d="M0.8,0.5 L0.8,3.5 M11.2,0.5 L11.2,3.5" stroke="#fff" stroke-width="1.1"/><path d="M1.5,1.5 L10.5,1.5" stroke="#fff" stroke-width="1" stroke-dasharray="1 1"/><path d="M6,1.5 L6,8.5" stroke="#fff" stroke-width="2"/><path d="M13.8,2.5 L15.2,1.2 L15.2,8.5" fill="none" stroke="#fff" stroke-width="1.3"/></svg>
<div class="t" style="left:392.8px;top:1019.0px;width:67.2px;font-family:'Liberation Mono', monospace;font-weight:700;font-size:14px;line-height:14px;color:#ffffff;transform:scale(0.983,1.120) ;transform-origin:left 10.7px;">CHAMPION</div>
<svg class="b" style="left:512px;top:994px" width="64" height="42" viewBox="0 0 64 42"><defs><linearGradient id="og" gradientUnits="userSpaceOnUse" x1="7" y1="0" x2="60" y2="0"><stop offset="0" stop-color="#ea5e18"/><stop offset="0.5" stop-color="#f08414"/><stop offset="1" stop-color="#f8ac10"/></linearGradient></defs><path d="M43,3.5 L33,5 L27,9 L24,7 L19,12 L16,10 L10,15 L12,18 L7,21 L10,25 L7,29 L11,32 L10,35 L17,36 L19,38.5 L25,37 L28,39 L43,36.5 Z" fill="#140a04" stroke="#140a04" stroke-width="2.4"/><circle cx="43" cy="20" r="16.5" fill="#140a04" stroke="#140a04" stroke-width="2.4"/><path d="M43,3.5 L33,5 L27,9 L24,7 L19,12 L16,10 L10,15 L12,18 L7,21 L10,25 L7,29 L11,32 L10,35 L17,36 L19,38.5 L25,37 L28,39 L43,36.5 Z" fill="url(#og)"/><circle cx="43" cy="20" r="16.5" fill="url(#og)"/></svg>
<div class="t" style="left:524.1px;top:1009.5px;width:38.9px;font-family:'Liberation Sans', sans-serif;font-weight:700;font-size:16px;line-height:16px;color:#fffaf2;transform:scale(0.978,1.100) skewY(-7deg);transform-origin:center 13.5px;">БЛІЦ</div>
<div class="t" style="left:645.9px;top:998.6px;width:52.1px;font-family:'Liberation Sans', sans-serif;font-weight:700;font-size:14px;line-height:14px;color:#d8182c;transform:scale(0.805,1.000) ;transform-origin:center 11.9px;-webkit-text-stroke:0.6px #f0c0c0;letter-spacing:-0.5px;">101.9fm</div>
<div class="t" style="left:615.0px;top:1013.2px;width:90.8px;font-family:'Liberation Sans', sans-serif;font-weight:700;font-size:21px;line-height:21px;color:#050505;transform:scale(0.759,1.000) ;transform-origin:center 17.8px;text-shadow:1px 0 0 #fff,-1px 0 0 #fff,0 1px 0 #fff,0 -1px 0 #fff,1px 1px 0 #fff,-1px -1px 0 #fff,1px -1px 0 #fff,-1px 1px 0 #fff;">ШЛЯГЕР</div>
<div class="t" style="left:736.5px;top:1006.3px;width:67.0px;font-family:'Liberation Sans', sans-serif;font-weight:400;font-size:5.5px;line-height:5.5px;color:#b8b8b8;transform:scale(0.985,1.000) ;transform-origin:center 4.7px;letter-spacing:0.6px;">затишне та спокійне радіо</div>
<div class="t" style="left:731.0px;top:1014.9px;width:78.0px;font-family:'Liberation Serif', serif;font-weight:400;font-size:18px;line-height:18px;color:#f4f4f4;">R E L A X</div>
<svg class="b" style="left:810px;top:998px" width="16" height="22" viewBox="0 0 16 22"><path d="M2,2 Q8,4 10,8 L14,5 L12,10 Q11,13 8,14 L3,20 L7,12 Q4,8 2,2 Z" fill="#e8e8e8"/></svg>
<svg class="b" style="left:878px;top:995px" width="40" height="40" viewBox="0 0 40 40"><path d="M21,8 Q30,-1 33,3 Q30,12 21,13 Z" fill="#3e9a50"/><path d="M18,9 Q24,18 28,27 M18,9 Q15,22 9,31" fill="none" stroke="#f0f0f0" stroke-width="1.3"/><circle cx="8" cy="32" r="6.2" fill="#e8484a"/><circle cx="28" cy="28" r="6.2" fill="#e8484a"/></svg>
<div class="t" style="left:857.1px;top:1007.3px;width:74.4px;font-family:'Liberation Sans', sans-serif;font-weight:700;font-size:12px;line-height:12px;color:#ffffff;transform:scale(0.780,1.000) ;transform-origin:center 10.2px;-webkit-text-stroke:0.3px #000;">РАДЮЛЮКС</div>
<div class="t" style="left:982.7px;top:1010.7px;width:57.6px;font-family:'Liberation Sans', sans-serif;font-weight:400;font-size:14px;line-height:14px;color:#c9e6a0;transform:scale(0.703,1.000) ;transform-origin:center 11.9px;">ПЕРЕЦЬ</div>
<svg class="b" style="left:1018px;top:997px" width="18" height="36" viewBox="0 0 18 36"><path d="M7,7 Q12,5 12.5,11 Q12,22 9,34 Q7.5,28 6.5,20 Q5,12 7,7 Z" fill="#c02828"/><path d="M8,8 Q9,3 13,3.5 Q15,4 14.5,6" fill="none" stroke="#5a9040" stroke-width="1.4"/></svg>
<div class="t" style="left:987.7px;top:1001.8px;width:32.7px;font-family:'Liberation Sans', sans-serif;font-weight:400;font-size:5px;line-height:5px;color:#c0b8a0;transform:scale(1.041,1.000) ;transform-origin:center 4.2px;">сонячне радіо</div>
<div class="b" style="left:1121.7px;top:997px;width:15px;height:26px;background:#1f86c8;"></div>
<div class="t" style="left:1123.4px;top:1004.1px;width:11.1px;font-family:'Liberation Sans', sans-serif;font-weight:700;font-size:20px;line-height:20px;color:#ffffff;transform:scale(0.899,1.000) ;transform-origin:center 16.9px;">1</div>
<div class="b" style="left:1100px;top:1026px;width:86px;height:29px;background:#0d0d0d;border:1.5px solid #c8c8c8"></div>
<div class="b" style="left:1177px;top:1027px;width:1.2px;height:28px;background:#c8c8c8;"></div>
<div class="t" style="left:1105.5px;top:1034.1px;width:40.1px;font-family:'Liberation Sans', sans-serif;font-weight:700;font-size:18.5px;line-height:18.5px;color:#ffffff;transform:scale(0.985,1.000) ;transform-origin:left 15.7px;">PRO</div>
<svg class="b" style="left:1146px;top:1030px" width="30" height="24" viewBox="0 0 30 24"><defs><linearGradient id="tvg" x1="0" y1="0" x2="1" y2="0"><stop offset="0" stop-color="#3a8ad0"/><stop offset="0.3" stop-color="#60b040"/><stop offset="0.55" stop-color="#f0d020"/><stop offset="0.8" stop-color="#e02020"/><stop offset="1" stop-color="#d01818"/></linearGradient></defs><path d="M8,2 L15,5 L22,1" fill="none" stroke="#888" stroke-width="0.8"/><rect x="1" y="4.5" width="28" height="17.5" rx="1.5" fill="url(#tvg)"/></svg>
<div class="t" style="left:1151.1px;top:1036.9px;width:19.8px;font-family:'Liberation Sans', sans-serif;font-weight:700;font-size:15.5px;line-height:15.5px;color:#ffffff;transform:scale(1.111,1.000) ;transform-origin:center 13.1px;letter-spacing:1px;">TV</div>
<div class="t" style="left:1170px;top:1035.5px;width:26px;height:12px;font-family:'Liberation Sans',sans-serif;font-weight:700;font-size:7.8px;line-height:12px;color:#fff;transform:rotate(-90deg);text-align:center">NET.UA</div>
<div class="t" style="left:1121.1px;top:1021.0px;width:15.9px;font-family:'Liberation Sans', sans-serif;font-weight:700;font-size:13px;line-height:13px;color:#ffffff;transform:scale(0.850,1.000) ;transform-origin:center 11.0px;">fm</div>
</body></html>
